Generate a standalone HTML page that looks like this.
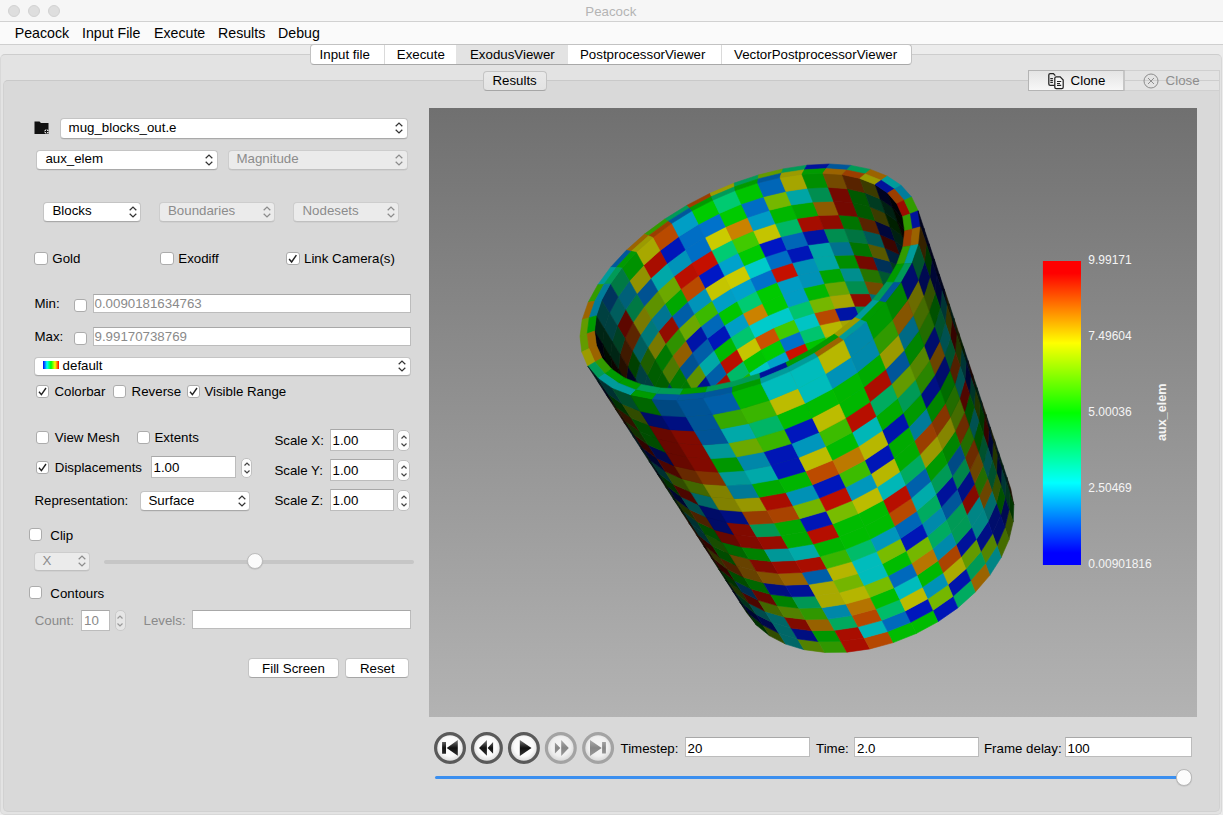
<!DOCTYPE html><html><head><meta charset="utf-8"><style>
*{margin:0;padding:0;box-sizing:border-box}
html,body{width:1223px;height:815px;overflow:hidden;background:#e3e3e3;font-family:"Liberation Sans",sans-serif}
.abs{position:absolute}
.t{position:absolute;line-height:1;white-space:nowrap}
.combo{position:absolute;background:#fff;border:1px solid #c4c4c4;border-bottom-color:#a9a9a9;border-radius:4px;box-shadow:0 0.5px 0.5px rgba(0,0,0,0.08)}
.combo.dis{background:#ebebeb;border-color:#cdcdcd;border-bottom-color:#c0c0c0}
.chev{position:absolute;width:8px;height:12px}
.chev svg{display:block}
.cb{position:absolute;background:#fff;border:1px solid #acacac;border-radius:3px}
.edit{position:absolute;background:#fff;border:1px solid #bcbcbc;border-top-color:#a8a8a8}
.spin{position:absolute;background:#fdfdfd;border:1px solid #c0c0c0;border-radius:5px}
.btn{position:absolute;background:#fff;border:1px solid #c4c4c4;border-bottom-color:#a6a6a6;border-radius:4px}
</style></head><body>
<div class="abs" style="left:0;top:0;width:1223px;height:22px;background:#f6f6f6;border-bottom:1px solid #d1d1d1"></div>
<div class="abs" style="left:8px;top:5px;width:12px;height:12px;border-radius:6px;background:#dedede;border:1px solid #d2d2d2"></div>
<div class="abs" style="left:28px;top:5px;width:12px;height:12px;border-radius:6px;background:#dedede;border:1px solid #d2d2d2"></div>
<div class="abs" style="left:48px;top:5px;width:12px;height:12px;border-radius:6px;background:#dedede;border:1px solid #d2d2d2"></div>
<div class="t" style="left:585.3px;top:4.90px;font-size:13.3px;color:#b4b4b4;">Peacock</div>

<div class="abs" style="left:0;top:22px;width:1223px;height:23px;background:#fafafa;border-bottom:1px solid #cfcfcf"></div>
<div class="t" style="left:14.7px;top:25.97px;font-size:14.2px;color:#000;">Peacock</div>

<div class="t" style="left:82px;top:25.97px;font-size:14.2px;color:#000;">Input File</div>

<div class="t" style="left:154px;top:25.97px;font-size:14.2px;color:#000;">Execute</div>

<div class="t" style="left:218px;top:25.97px;font-size:14.2px;color:#000;">Results</div>

<div class="t" style="left:278px;top:25.97px;font-size:14.2px;color:#000;">Debug</div>

<div class="abs" style="left:0;top:45px;width:1223px;height:770px;background:#ececec"></div>
<div class="abs" style="left:0;top:54px;width:1222px;height:761px;background:#e3e3e3;border:1px solid #d8d8d8;border-top-color:#cdcdcd;border-radius:5px"></div>
<div class="abs" style="left:3px;top:80px;width:1217px;height:732px;background:#d9d9d9;border:1px solid #d1d1d1;border-top-color:#c9c9c9;border-radius:5px;border-top-right-radius:0"></div>
<div class="abs" style="left:310px;top:44px;width:602px;height:21px;background:#fff;border:1px solid #c2c2c2;border-bottom-color:#a9a9a9;border-radius:4px;overflow:hidden"><div class="abs" style="left:145px;top:0;width:112px;height:20px;background:#e3e3e3"></div><div class="abs" style="left:73px;top:0;width:1px;height:20px;background:#dadada"></div><div class="abs" style="left:410px;top:0;width:1px;height:20px;background:#dadada"></div></div>
<div class="t" style="left:319.6px;top:48.00px;font-size:13.3px;color:#000;">Input file</div>

<div class="t" style="left:396.8px;top:48.00px;font-size:13.3px;color:#000;">Execute</div>

<div class="t" style="left:470px;top:48.00px;font-size:13.3px;color:#000;">ExodusViewer</div>

<div class="t" style="left:580px;top:48.00px;font-size:13.3px;color:#000;">PostprocessorViewer</div>

<div class="t" style="left:734px;top:48.00px;font-size:13.3px;color:#000;">VectorPostprocessorViewer</div>

<div class="btn" style="left:482.6px;top:70.6px;width:64px;height:20px;background:linear-gradient(#e9e9e9,#e3e3e3)"></div>
<div class="t" style="left:482.6px;width:64px;text-align:center;top:73.90px;font-size:13.3px">Results</div>

<div class="abs" style="left:1028px;top:70px;width:97px;height:21px;background:linear-gradient(#e4e4e4,#f7f7f7);border:1px solid #b4b4b4;border-right:2px solid #c6c6c6"></div>
<div class="abs" style="left:1125px;top:70px;width:95px;height:21px;background:#e3e3e3;border:1px solid #d0d0d0;border-left:none"></div><div class="abs" style="left:1125px;top:80px;width:94px;height:1px;background:#cecece"></div>
<div class="t" style="left:1070.6px;top:74.00px;font-size:13.3px;color:#000;">Clone</div>

<div class="t" style="left:1165.6px;top:74.00px;font-size:13.3px;color:#8d8d8d;">Close</div>

<svg class="abs" style="left:1040px;top:68px" width="30" height="24" viewBox="1040 68 30 24"><path d="M1054.6 85.3 h-4.4 q-1.4 0 -1.4 -1.4 v-9 q0 -1.4 1.4 -1.4 h3.2 l1.9 2.1" fill="none" stroke="#222" stroke-width="1.25"/><path d="M1050.3 78.5h2.6M1050.3 80.4h2.6M1050.3 82.4h2.6" stroke="#222" stroke-width="1.1"/><path d="M1056.2 76.8 h4 l3 3.3 v7.2 q0 1.4 -1.4 1.4 h-5.6 q-1.4 0 -1.4 -1.4 v-9.1 q0 -1.4 1.4 -1.4 z" fill="#f8f8f8" stroke="#222" stroke-width="1.25"/><path d="M1057 81.5h4.2M1057 83.5h3M1057 85.4h4.2" stroke="#222" stroke-width="1.1"/></svg>
<svg class="abs" style="left:1143px;top:73px" width="16" height="16" viewBox="0 0 16 16"><circle cx="8" cy="8" r="7" fill="none" stroke="#8d8d8d" stroke-width="1"/><path d="M5 5 L11 11 M11 5 L5 11" stroke="#8d8d8d" stroke-width="1"/></svg>
<svg class="abs" style="left:34px;top:120px" width="16" height="15" viewBox="0 0 16 15"><path d="M0.5 1.5 h5 l1.5 1.5 h7.5 v11 h-14 z" fill="#111"/><path d="M10.5 11.5 h4 M12.5 9.5 v4" stroke="#fff" stroke-width="2.4"/><path d="M10.5 11.5 h4 M12.5 9.5 v4" stroke="#111" stroke-width="1.1"/></svg>
<div class="combo" style="left:59.5px;top:118px;width:348px;height:20.5px"></div>
<div class="chev" style="left:395.0px;top:122.2px"><svg width="8" height="12" viewBox="0 0 8 12"><path d="M0.7 4.3 L4 1.1 L7.3 4.3 M0.7 7.7 L4 10.9 L7.3 7.7" fill="none" stroke="#333" stroke-width="1.25"/></svg></div>
<div class="t" style="left:68.6px;top:121.20px;font-size:13.3px;color:#000;">mug_blocks_out.e</div>

<div class="combo" style="left:36px;top:150px;width:181.5px;height:20px"></div>
<div class="chev" style="left:205.0px;top:154.0px"><svg width="8" height="12" viewBox="0 0 8 12"><path d="M0.7 4.3 L4 1.1 L7.3 4.3 M0.7 7.7 L4 10.9 L7.3 7.7" fill="none" stroke="#333" stroke-width="1.25"/></svg></div>
<div class="t" style="left:45.4px;top:152.10px;font-size:13.3px;color:#000;">aux_elem</div>

<div class="combo dis" style="left:227.5px;top:150px;width:180px;height:20px"></div>
<div class="chev" style="left:395.0px;top:154.0px"><svg width="8" height="12" viewBox="0 0 8 12"><path d="M0.7 4.3 L4 1.1 L7.3 4.3 M0.7 7.7 L4 10.9 L7.3 7.7" fill="none" stroke="#8c8c8c" stroke-width="1.25"/></svg></div>
<div class="t" style="left:236.5px;top:152.10px;font-size:13.3px;color:#8c8c8c;">Magnitude</div>

<div class="combo" style="left:43.4px;top:202px;width:97.6px;height:19.5px"></div>
<div class="chev" style="left:128.5px;top:205.8px"><svg width="8" height="12" viewBox="0 0 8 12"><path d="M0.7 4.3 L4 1.1 L7.3 4.3 M0.7 7.7 L4 10.9 L7.3 7.7" fill="none" stroke="#333" stroke-width="1.25"/></svg></div>
<div class="t" style="left:52.5px;top:204.20px;font-size:13.3px;color:#000;">Blocks</div>

<div class="combo dis" style="left:159px;top:202px;width:116px;height:19.5px"></div>
<div class="chev" style="left:262.5px;top:205.8px"><svg width="8" height="12" viewBox="0 0 8 12"><path d="M0.7 4.3 L4 1.1 L7.3 4.3 M0.7 7.7 L4 10.9 L7.3 7.7" fill="none" stroke="#8c8c8c" stroke-width="1.25"/></svg></div>
<div class="t" style="left:168px;top:204.20px;font-size:13.3px;color:#8c8c8c;">Boundaries</div>

<div class="combo dis" style="left:293.4px;top:202px;width:106px;height:19.5px"></div>
<div class="chev" style="left:386.9px;top:205.8px"><svg width="8" height="12" viewBox="0 0 8 12"><path d="M0.7 4.3 L4 1.1 L7.3 4.3 M0.7 7.7 L4 10.9 L7.3 7.7" fill="none" stroke="#8c8c8c" stroke-width="1.25"/></svg></div>
<div class="t" style="left:302.5px;top:204.20px;font-size:13.3px;color:#8c8c8c;">Nodesets</div>

<div class="cb" style="left:34px;top:251.5px;width:13.5px;height:13.5px"></div>

<div class="t" style="left:52.3px;top:251.80px;font-size:13.3px;color:#000;">Gold</div>

<div class="cb" style="left:160px;top:251.5px;width:13.5px;height:13.5px"></div>

<div class="t" style="left:178.3px;top:251.80px;font-size:13.3px;color:#000;">Exodiff</div>

<div class="cb" style="left:286px;top:251.5px;width:13.5px;height:13.5px"></div>
<svg class="abs" style="left:286px;top:251.5px" width="13.5" height="13.5" viewBox="0 0 13 13"><path d="M3 6.8 L5.4 9.6 L10 3" fill="none" stroke="#222" stroke-width="1.4"/></svg>

<div class="t" style="left:304px;top:251.80px;font-size:13.3px;color:#000;">Link Camera(s)</div>

<div class="t" style="left:34.5px;top:297.10px;font-size:13.3px;color:#000;">Min:</div>

<div class="cb" style="left:74.4px;top:298.6px;width:13px;height:13px"></div>

<div class="edit" style="left:92.9px;top:294px;width:318px;height:19px"></div>
<div class="t" style="left:94.5px;top:297.10px;font-size:13.3px;color:#8a8a8a;">0.0090181634763</div>

<div class="t" style="left:34.5px;top:330.30px;font-size:13.3px;color:#000;">Max:</div>

<div class="cb" style="left:74.4px;top:332px;width:13px;height:13px"></div>

<div class="edit" style="left:92.9px;top:327.2px;width:318px;height:19px"></div>
<div class="t" style="left:94.5px;top:330.30px;font-size:13.3px;color:#8a8a8a;">9.99170738769</div>

<div class="combo" style="left:33.5px;top:356.5px;width:377px;height:19.5px"></div>
<div class="chev" style="left:398.0px;top:360.2px"><svg width="8" height="12" viewBox="0 0 8 12"><path d="M0.7 4.3 L4 1.1 L7.3 4.3 M0.7 7.7 L4 10.9 L7.3 7.7" fill="none" stroke="#333" stroke-width="1.25"/></svg></div>
<div class="abs" style="left:42.7px;top:360.7px;width:16.3px;height:8.5px;background:linear-gradient(90deg,#00f,#0ff,#0f0,#ff0,#f00)"></div><div class="t" style="left:62.6px;top:358.90px;font-size:13.3px;color:#000;">default</div>

<div class="cb" style="left:36.4px;top:384.8px;width:13px;height:13px"></div>
<svg class="abs" style="left:36.4px;top:384.8px" width="13" height="13" viewBox="0 0 13 13"><path d="M3 6.8 L5.4 9.6 L10 3" fill="none" stroke="#222" stroke-width="1.4"/></svg>

<div class="t" style="left:54.4px;top:384.90px;font-size:13.3px;color:#000;">Colorbar</div>

<div class="cb" style="left:113.3px;top:384.8px;width:13px;height:13px"></div>

<div class="t" style="left:131.6px;top:384.90px;font-size:13.3px;color:#000;">Reverse</div>

<div class="cb" style="left:186.6px;top:384.8px;width:13px;height:13px"></div>
<svg class="abs" style="left:186.6px;top:384.8px" width="13" height="13" viewBox="0 0 13 13"><path d="M3 6.8 L5.4 9.6 L10 3" fill="none" stroke="#222" stroke-width="1.4"/></svg>

<div class="t" style="left:204.4px;top:384.90px;font-size:13.3px;color:#000;">Visible Range</div>

<div class="cb" style="left:36.4px;top:430.8px;width:13px;height:13px"></div>

<div class="t" style="left:54.8px;top:430.80px;font-size:13.3px;color:#000;">View Mesh</div>

<div class="cb" style="left:136.5px;top:430.8px;width:13px;height:13px"></div>

<div class="t" style="left:154.5px;top:430.80px;font-size:13.3px;color:#000;">Extents</div>

<div class="cb" style="left:36.4px;top:460.8px;width:13px;height:13px"></div>
<svg class="abs" style="left:36.4px;top:460.8px" width="13" height="13" viewBox="0 0 13 13"><path d="M3 6.8 L5.4 9.6 L10 3" fill="none" stroke="#222" stroke-width="1.4"/></svg>

<div class="t" style="left:54.8px;top:461.20px;font-size:13.3px;color:#000;">Displacements</div>

<div class="edit" style="left:151.2px;top:456.3px;width:85.3px;height:21.6px"></div>
<div class="t" style="left:153.5px;top:461.20px;font-size:13.3px;color:#000;">1.00</div>

<div class="spin" style="left:240.9px;top:458.3px;width:11.5px;height:20.2px"></div>
<div class="abs" style="left:242.7px;top:461.4px"><svg width="8" height="14" viewBox="0 0 8 14"><path d="M1.5 4.5 L4 2 L6.5 4.5 M1.5 9.5 L4 12 L6.5 9.5" fill="none" stroke="#444" stroke-width="1.2"/></svg></div>

<div class="t" style="left:34.4px;top:494.00px;font-size:13.3px;color:#000;">Representation:</div>

<div class="combo" style="left:139.8px;top:490.6px;width:110.5px;height:20px"></div>
<div class="chev" style="left:237.8px;top:494.6px"><svg width="8" height="12" viewBox="0 0 8 12"><path d="M0.7 4.3 L4 1.1 L7.3 4.3 M0.7 7.7 L4 10.9 L7.3 7.7" fill="none" stroke="#333" stroke-width="1.25"/></svg></div>
<div class="t" style="left:148.5px;top:494.00px;font-size:13.3px;color:#000;">Surface</div>

<div class="t" style="left:274.4px;top:433.80px;font-size:13.3px;color:#000;">Scale X:</div>

<div class="edit" style="left:330.1px;top:429.2px;width:63.8px;height:21.5px"></div>
<div class="t" style="left:332.5px;top:433.80px;font-size:13.3px;color:#000;">1.00</div>

<div class="spin" style="left:397.4px;top:430.2px;width:12.2px;height:21px"></div>
<div class="abs" style="left:399.5px;top:433.7px"><svg width="8" height="14" viewBox="0 0 8 14"><path d="M1.5 4.5 L4 2 L6.5 4.5 M1.5 9.5 L4 12 L6.5 9.5" fill="none" stroke="#444" stroke-width="1.2"/></svg></div>

<div class="t" style="left:274.4px;top:463.50px;font-size:13.3px;color:#000;">Scale Y:</div>

<div class="edit" style="left:330.1px;top:459.2px;width:63.8px;height:21.5px"></div>
<div class="t" style="left:332.5px;top:463.50px;font-size:13.3px;color:#000;">1.00</div>

<div class="spin" style="left:397.4px;top:460.2px;width:12.2px;height:21px"></div>
<div class="abs" style="left:399.5px;top:463.7px"><svg width="8" height="14" viewBox="0 0 8 14"><path d="M1.5 4.5 L4 2 L6.5 4.5 M1.5 9.5 L4 12 L6.5 9.5" fill="none" stroke="#444" stroke-width="1.2"/></svg></div>

<div class="t" style="left:274.4px;top:493.60px;font-size:13.3px;color:#000;">Scale Z:</div>

<div class="edit" style="left:330.1px;top:489.3px;width:63.8px;height:21.5px"></div>
<div class="t" style="left:332.5px;top:493.60px;font-size:13.3px;color:#000;">1.00</div>

<div class="spin" style="left:397.4px;top:490.3px;width:12.2px;height:21px"></div>
<div class="abs" style="left:399.5px;top:493.8px"><svg width="8" height="14" viewBox="0 0 8 14"><path d="M1.5 4.5 L4 2 L6.5 4.5 M1.5 9.5 L4 12 L6.5 9.5" fill="none" stroke="#444" stroke-width="1.2"/></svg></div>

<div class="cb" style="left:28.5px;top:527.7px;width:13px;height:13px"></div>

<div class="t" style="left:50.3px;top:529.20px;font-size:13.3px;color:#000;">Clip</div>

<div class="combo dis" style="left:33.9px;top:551.6px;width:56.4px;height:19.6px"></div>
<div class="chev" style="left:77.8px;top:555.4px"><svg width="8" height="12" viewBox="0 0 8 12"><path d="M0.7 4.3 L4 1.1 L7.3 4.3 M0.7 7.7 L4 10.9 L7.3 7.7" fill="none" stroke="#8c8c8c" stroke-width="1.25"/></svg></div>
<div class="t" style="left:42.6px;top:553.80px;font-size:13.3px;color:#8c8c8c;">X</div>

<div class="abs" style="left:104px;top:559.5px;width:310px;height:4px;border-radius:2px;background:#c6c6c6"></div>
<div class="abs" style="left:247px;top:553.2px;width:16.2px;height:16.2px;border-radius:8.1px;background:#fbfbfb;border:1px solid #bdbdbd;box-shadow:0 0.5px 1px rgba(0,0,0,0.15)"></div>
<div class="cb" style="left:28.5px;top:585.7px;width:13px;height:13px"></div>

<div class="t" style="left:50.3px;top:586.90px;font-size:13.3px;color:#000;">Contours</div>

<div class="t" style="left:34.7px;top:613.90px;font-size:13.3px;color:#8a8a8a;">Count:</div>

<div class="edit" style="left:81.3px;top:609.5px;width:29.1px;height:21px"></div>
<div class="t" style="left:84px;top:613.90px;font-size:13.3px;color:#8a8a8a;">10</div>

<div class="spin" style="left:114.5px;top:610px;width:11.8px;height:21px;background:#e6e6e6;border-color:#cacaca"></div>
<div class="abs" style="left:116.4px;top:613.5px"><svg width="8" height="14" viewBox="0 0 8 14"><path d="M1.5 4.5 L4 2 L6.5 4.5 M1.5 9.5 L4 12 L6.5 9.5" fill="none" stroke="#999" stroke-width="1.2"/></svg></div>

<div class="t" style="left:143.5px;top:613.90px;font-size:13.3px;color:#8a8a8a;">Levels:</div>

<div class="edit" style="left:191.7px;top:609.6px;width:219px;height:19.7px"></div>

<div class="btn" style="left:247.7px;top:658.4px;width:91.6px;height:20px"></div>
<div class="t" style="left:247.7px;width:91.6px;text-align:center;top:662.30px;font-size:13.3px">Fill Screen</div>

<div class="btn" style="left:345.4px;top:658.4px;width:63.8px;height:20px"></div>
<div class="t" style="left:345.4px;width:63.8px;text-align:center;top:662.30px;font-size:13.3px">Reset</div>

<div class="abs" style="left:429px;top:108px;width:768px;height:609px;background:linear-gradient(#707070,#b3b3b3);overflow:hidden"><svg class="abs" style="left:0;top:0" width="768" height="609" viewBox="0 0 768 609">
<polygon points="394.4,323.0 399.5,333.9 382.1,343.2 376.7,332.4" fill="#cb1300" stroke="#cb1300" stroke-width="0.6"/>
<polygon points="412.8,315.4 417.8,326.4 399.5,333.9 394.4,323.0" fill="#00ca87" stroke="#00ca87" stroke-width="0.6"/>
<polygon points="376.7,332.4 382.1,343.2 365.8,354.0 360.3,343.3" fill="#6dc500" stroke="#6dc500" stroke-width="0.6"/>
<polygon points="431.7,309.8 436.5,320.8 417.8,326.4 412.8,315.4" fill="#00c45d" stroke="#00c45d" stroke-width="0.6"/>
<polygon points="360.3,343.3 365.8,354.0 351.0,366.2 345.3,355.6" fill="#1fb900" stroke="#1fb900" stroke-width="0.6"/>
<polygon points="450.6,306.2 455.3,317.3 436.5,320.8 431.7,309.8" fill="#b75300" stroke="#b75300" stroke-width="0.6"/>
<polygon points="389.1,312.1 394.4,323.0 376.7,332.4 371.3,321.5" fill="#57cb00" stroke="#57cb00" stroke-width="0.6"/>
<polygon points="407.7,304.4 412.8,315.4 394.4,323.0 389.1,312.1" fill="#ca0900" stroke="#ca0900" stroke-width="0.6"/>
<polygon points="371.3,321.5 376.7,332.4 360.3,343.3 354.7,332.5" fill="#000cc5" stroke="#000cc5" stroke-width="0.6"/>
<polygon points="426.8,298.6 431.7,309.8 412.8,315.4 407.7,304.4" fill="#0028c4" stroke="#0028c4" stroke-width="0.6"/>
<polygon points="345.3,355.6 351.0,366.2 338.0,379.6 332.1,369.0" fill="#0048a8" stroke="#0048a8" stroke-width="0.6"/>
<polygon points="469.2,304.7 473.8,315.9 455.3,317.3 450.6,306.2" fill="#a50d00" stroke="#a50d00" stroke-width="0.6"/>
<polygon points="354.7,332.5 360.3,343.3 345.3,355.6 339.5,344.9" fill="#b99e00" stroke="#b99e00" stroke-width="0.6"/>
<polygon points="445.9,295.0 450.6,306.2 431.7,309.8 426.8,298.6" fill="#00b719" stroke="#00b719" stroke-width="0.6"/>
<polygon points="383.8,301.0 389.1,312.1 371.3,321.5 365.8,310.5" fill="#cb7700" stroke="#cb7700" stroke-width="0.6"/>
<polygon points="402.6,293.2 407.7,304.4 389.1,312.1 383.8,301.0" fill="#ca5300" stroke="#ca5300" stroke-width="0.6"/>
<polygon points="365.8,310.5 371.3,321.5 354.7,332.5 349.0,321.6" fill="#009ec5" stroke="#009ec5" stroke-width="0.6"/>
<polygon points="421.8,287.4 426.8,298.6 407.7,304.4 402.6,293.2" fill="#c4a200" stroke="#c4a200" stroke-width="0.6"/>
<polygon points="339.5,344.9 345.3,355.6 332.1,369.0 326.2,358.4" fill="#a85900" stroke="#a85900" stroke-width="0.6"/>
<polygon points="332.1,369.0 338.0,379.6 327.1,393.8 321.1,383.3" fill="#009216" stroke="#009216" stroke-width="0.6"/>
<polygon points="464.7,293.4 469.2,304.7 450.6,306.2 445.9,295.0" fill="#00a591" stroke="#00a591" stroke-width="0.6"/>
<polygon points="349.0,321.6 354.7,332.5 339.5,344.9 333.7,334.0" fill="#87b900" stroke="#87b900" stroke-width="0.6"/>
<polygon points="487.1,305.5 491.5,316.7 473.8,315.9 469.2,304.7" fill="#698e00" stroke="#698e00" stroke-width="0.6"/>
<polygon points="441.1,283.6 445.9,295.0 426.8,298.6 421.8,287.4" fill="#b79800" stroke="#b79800" stroke-width="0.6"/>
<polygon points="378.5,289.7 383.8,301.0 365.8,310.5 360.3,299.3" fill="#0054cb" stroke="#0054cb" stroke-width="0.6"/>
<polygon points="397.4,281.9 402.6,293.2 383.8,301.0 378.5,289.7" fill="#ca6400" stroke="#ca6400" stroke-width="0.6"/>
<polygon points="360.3,299.3 365.8,310.5 349.0,321.6 343.3,310.5" fill="#c5a600" stroke="#c5a600" stroke-width="0.6"/>
<polygon points="416.8,276.0 421.8,287.4 402.6,293.2 397.4,281.9" fill="#89c400" stroke="#89c400" stroke-width="0.6"/>
<polygon points="333.7,334.0 339.5,344.9 326.2,358.4 320.2,347.6" fill="#88a800" stroke="#88a800" stroke-width="0.6"/>
<polygon points="326.2,358.4 332.1,369.0 321.1,383.3 315.1,372.7" fill="#009269" stroke="#009269" stroke-width="0.6"/>
<polygon points="460.0,282.0 464.7,293.4 445.9,295.0 441.1,283.6" fill="#a53f00" stroke="#a53f00" stroke-width="0.6"/>
<polygon points="343.3,310.5 349.0,321.6 333.7,334.0 327.8,323.0" fill="#28b900" stroke="#28b900" stroke-width="0.6"/>
<polygon points="482.7,294.1 487.1,305.5 469.2,304.7 464.7,293.4" fill="#8e1b00" stroke="#8e1b00" stroke-width="0.6"/>
<polygon points="436.3,272.1 441.1,283.6 421.8,287.4 416.8,276.0" fill="#0099b7" stroke="#0099b7" stroke-width="0.6"/>
<polygon points="321.1,383.3 327.1,393.8 318.6,408.6 312.5,398.2" fill="#797700" stroke="#797700" stroke-width="0.6"/>
<polygon points="373.0,278.4 378.5,289.7 360.3,299.3 354.7,288.1" fill="#007acb" stroke="#007acb" stroke-width="0.6"/>
<polygon points="392.2,270.5 397.4,281.9 378.5,289.7 373.0,278.4" fill="#56ca00" stroke="#56ca00" stroke-width="0.6"/>
<polygon points="503.9,308.4 508.1,319.7 491.5,316.7 487.1,305.5" fill="#005674" stroke="#005674" stroke-width="0.6"/>
<polygon points="354.7,288.1 360.3,299.3 343.3,310.5 337.5,299.3" fill="#c53600" stroke="#c53600" stroke-width="0.6"/>
<polygon points="411.8,264.5 416.8,276.0 397.4,281.9 392.2,270.5" fill="#00c40d" stroke="#00c40d" stroke-width="0.6"/>
<polygon points="327.8,323.0 333.7,334.0 320.2,347.6 314.2,336.7" fill="#00a807" stroke="#00a807" stroke-width="0.6"/>
<polygon points="320.2,347.6 326.2,358.4 315.1,372.7 308.9,362.0" fill="#009276" stroke="#009276" stroke-width="0.6"/>
<polygon points="455.4,270.4 460.0,282.0 441.1,283.6 436.3,272.1" fill="#009aa5" stroke="#009aa5" stroke-width="0.6"/>
<polygon points="337.5,299.3 343.3,310.5 327.8,323.0 321.8,312.0" fill="#0070b9" stroke="#0070b9" stroke-width="0.6"/>
<polygon points="478.2,282.6 482.7,294.1 464.7,293.4 460.0,282.0" fill="#008e27" stroke="#008e27" stroke-width="0.6"/>
<polygon points="431.4,260.5 436.3,272.1 416.8,276.0 411.8,264.5" fill="#4db700" stroke="#4db700" stroke-width="0.6"/>
<polygon points="315.1,372.7 321.1,383.3 312.5,398.2 306.3,387.7" fill="#791b00" stroke="#791b00" stroke-width="0.6"/>
<polygon points="367.6,266.9 373.0,278.4 354.7,288.1 349.0,276.7" fill="#cb7700" stroke="#cb7700" stroke-width="0.6"/>
<polygon points="386.9,258.9 392.2,270.5 373.0,278.4 367.6,266.9" fill="#3bca00" stroke="#3bca00" stroke-width="0.6"/>
<polygon points="499.6,297.0 503.9,308.4 487.1,305.5 482.7,294.1" fill="#007409" stroke="#007409" stroke-width="0.6"/>
<polygon points="349.0,276.7 354.7,288.1 337.5,299.3 331.7,288.0" fill="#006dc5" stroke="#006dc5" stroke-width="0.6"/>
<polygon points="406.7,252.8 411.8,264.5 392.2,270.5 386.9,258.9" fill="#00c461" stroke="#00c461" stroke-width="0.6"/>
<polygon points="312.5,398.2 318.6,408.6 312.8,423.7 306.5,413.4" fill="#085d00" stroke="#085d00" stroke-width="0.6"/>
<polygon points="321.8,312.0 327.8,323.0 314.2,336.7 308.1,325.7" fill="#a83200" stroke="#a83200" stroke-width="0.6"/>
<polygon points="519.2,313.7 523.3,325.0 508.1,319.7 503.9,308.4" fill="#485800" stroke="#485800" stroke-width="0.6"/>
<polygon points="314.2,336.7 320.2,347.6 308.9,362.0 302.7,351.2" fill="#009225" stroke="#009225" stroke-width="0.6"/>
<polygon points="450.7,258.7 455.4,270.4 436.3,272.1 431.4,260.5" fill="#a59a00" stroke="#a59a00" stroke-width="0.6"/>
<polygon points="331.7,288.0 337.5,299.3 321.8,312.0 315.8,300.7" fill="#b92800" stroke="#b92800" stroke-width="0.6"/>
<polygon points="473.7,271.0 478.2,282.6 460.0,282.0 455.4,270.4" fill="#008e49" stroke="#008e49" stroke-width="0.6"/>
<polygon points="426.5,248.8 431.4,260.5 411.8,264.5 406.7,252.8" fill="#b79b00" stroke="#b79b00" stroke-width="0.6"/>
<polygon points="308.9,362.0 315.1,372.7 306.3,387.7 300.0,377.1" fill="#001179" stroke="#001179" stroke-width="0.6"/>
<polygon points="362.0,255.3 367.6,266.9 349.0,276.7 343.3,265.2" fill="#cb1400" stroke="#cb1400" stroke-width="0.6"/>
<polygon points="381.5,247.2 386.9,258.9 367.6,266.9 362.0,255.3" fill="#0aca00" stroke="#0aca00" stroke-width="0.6"/>
<polygon points="495.3,285.5 499.6,297.0 482.7,294.1 478.2,282.6" fill="#001374" stroke="#001374" stroke-width="0.6"/>
<polygon points="343.3,265.2 349.0,276.7 331.7,288.0 325.7,276.6" fill="#0049c5" stroke="#0049c5" stroke-width="0.6"/>
<polygon points="401.5,241.0 406.7,252.8 386.9,258.9 381.5,247.2" fill="#0fc400" stroke="#0fc400" stroke-width="0.6"/>
<polygon points="306.3,387.7 312.5,398.2 306.5,413.4 300.2,402.9" fill="#365d00" stroke="#365d00" stroke-width="0.6"/>
<polygon points="315.8,300.7 321.8,312.0 308.1,325.7 301.9,314.6" fill="#7fa800" stroke="#7fa800" stroke-width="0.6"/>
<polygon points="515.0,302.2 519.2,313.7 503.9,308.4 499.6,297.0" fill="#005458" stroke="#005458" stroke-width="0.6"/>
<polygon points="308.1,325.7 314.2,336.7 302.7,351.2 296.4,340.3" fill="#00925f" stroke="#00925f" stroke-width="0.6"/>
<polygon points="445.9,246.9 450.7,258.7 431.4,260.5 426.5,248.8" fill="#00a52d" stroke="#00a52d" stroke-width="0.6"/>
<polygon points="325.7,276.6 331.7,288.0 315.8,300.7 309.7,289.4" fill="#000fb9" stroke="#000fb9" stroke-width="0.6"/>
<polygon points="469.1,259.2 473.7,271.0 455.4,270.4 450.7,258.7" fill="#004b8e" stroke="#004b8e" stroke-width="0.6"/>
<polygon points="421.5,236.9 426.5,248.8 406.7,252.8 401.5,241.0" fill="#00b743" stroke="#00b743" stroke-width="0.6"/>
<polygon points="302.7,351.2 308.9,362.0 300.0,377.1 293.7,366.3" fill="#00795e" stroke="#00795e" stroke-width="0.6"/>
<polygon points="356.4,243.6 362.0,255.3 343.3,265.2 337.5,253.6" fill="#00a2cb" stroke="#00a2cb" stroke-width="0.6"/>
<polygon points="306.5,413.4 312.8,423.7 309.8,438.7 303.4,428.4" fill="#402300" stroke="#402300" stroke-width="0.6"/>
<polygon points="376.1,235.4 381.5,247.2 362.0,255.3 356.4,243.6" fill="#ca1000" stroke="#ca1000" stroke-width="0.6"/>
<polygon points="490.9,273.8 495.3,285.5 478.2,282.6 473.7,271.0" fill="#487400" stroke="#487400" stroke-width="0.6"/>
<polygon points="337.5,253.6 343.3,265.2 325.7,276.6 319.8,265.1" fill="#00c5c5" stroke="#00c5c5" stroke-width="0.6"/>
<polygon points="532.5,321.0 536.6,332.4 523.3,325.0 519.2,313.7" fill="#003b09" stroke="#003b09" stroke-width="0.6"/>
<polygon points="396.3,229.1 401.5,241.0 381.5,247.2 376.1,235.4" fill="#00c400" stroke="#00c400" stroke-width="0.6"/>
<polygon points="300.0,377.1 306.3,387.7 300.2,402.9 293.8,392.3" fill="#5d3000" stroke="#5d3000" stroke-width="0.6"/>
<polygon points="309.7,289.4 315.8,300.7 301.9,314.6 295.6,303.3" fill="#a88f00" stroke="#a88f00" stroke-width="0.6"/>
<polygon points="510.8,290.6 515.0,302.2 499.6,297.0 495.3,285.5" fill="#004158" stroke="#004158" stroke-width="0.6"/>
<polygon points="301.9,314.6 308.1,325.7 296.4,340.3 290.1,329.2" fill="#009277" stroke="#009277" stroke-width="0.6"/>
<polygon points="441.0,235.0 445.9,246.9 426.5,248.8 421.5,236.9" fill="#a57e00" stroke="#a57e00" stroke-width="0.6"/>
<polygon points="319.8,265.1 325.7,276.6 309.7,289.4 303.6,277.9" fill="#19b900" stroke="#19b900" stroke-width="0.6"/>
<polygon points="464.5,247.3 469.1,259.2 450.7,258.7 445.9,246.9" fill="#8e8e00" stroke="#8e8e00" stroke-width="0.6"/>
<polygon points="416.4,224.9 421.5,236.9 401.5,241.0 396.3,229.1" fill="#75b700" stroke="#75b700" stroke-width="0.6"/>
<polygon points="350.8,231.7 356.4,243.6 337.5,253.6 331.7,241.8" fill="#00cb00" stroke="#00cb00" stroke-width="0.6"/>
<polygon points="296.4,340.3 302.7,351.2 293.7,366.3 287.3,355.4" fill="#007935" stroke="#007935" stroke-width="0.6"/>
<polygon points="370.7,223.5 376.1,235.4 356.4,243.6 350.8,231.7" fill="#0071ca" stroke="#0071ca" stroke-width="0.6"/>
<polygon points="300.2,402.9 306.5,413.4 303.4,428.4 297.0,418.1" fill="#304000" stroke="#304000" stroke-width="0.6"/>
<polygon points="486.5,261.9 490.9,273.8 473.7,271.0 469.1,259.2" fill="#745d00" stroke="#745d00" stroke-width="0.6"/>
<polygon points="331.7,241.8 337.5,253.6 319.8,265.1 313.7,253.4" fill="#00c500" stroke="#00c500" stroke-width="0.6"/>
<polygon points="528.5,309.5 532.5,321.0 519.2,313.7 515.0,302.2" fill="#3b3b00" stroke="#3b3b00" stroke-width="0.6"/>
<polygon points="391.0,217.1 396.3,229.1 376.1,235.4 370.7,223.5" fill="#00c46e" stroke="#00c46e" stroke-width="0.6"/>
<polygon points="293.7,366.3 300.0,377.1 293.8,392.3 287.4,381.6" fill="#5d2200" stroke="#5d2200" stroke-width="0.6"/>
<polygon points="303.6,277.9 309.7,289.4 295.6,303.3 289.3,291.9" fill="#0ea800" stroke="#0ea800" stroke-width="0.6"/>
<polygon points="506.5,278.8 510.8,290.6 495.3,285.5 490.9,273.8" fill="#075800" stroke="#075800" stroke-width="0.6"/>
<polygon points="295.6,303.3 301.9,314.6 290.1,329.2 283.7,318.0" fill="#005292" stroke="#005292" stroke-width="0.6"/>
<polygon points="303.4,428.4 309.8,438.7 309.7,453.4 303.3,443.1" fill="#250e00" stroke="#250e00" stroke-width="0.6"/>
<polygon points="436.2,222.9 441.0,235.0 421.5,236.9 416.4,224.9" fill="#a53100" stroke="#a53100" stroke-width="0.6"/>
<polygon points="313.7,253.4 319.8,265.1 303.6,277.9 297.3,266.3" fill="#00b968" stroke="#00b968" stroke-width="0.6"/>
<polygon points="459.8,235.3 464.5,247.3 445.9,246.9 441.0,235.0" fill="#008e48" stroke="#008e48" stroke-width="0.6"/>
<polygon points="411.3,212.8 416.4,224.9 396.3,229.1 391.0,217.1" fill="#b7b700" stroke="#b7b700" stroke-width="0.6"/>
<polygon points="345.0,219.7 350.8,231.7 331.7,241.8 325.7,229.9" fill="#cb5100" stroke="#cb5100" stroke-width="0.6"/>
<polygon points="290.1,329.2 296.4,340.3 287.3,355.4 280.8,344.4" fill="#447900" stroke="#447900" stroke-width="0.6"/>
<polygon points="365.1,211.4 370.7,223.5 350.8,231.7 345.0,219.7" fill="#41ca00" stroke="#41ca00" stroke-width="0.6"/>
<polygon points="543.7,330.5 547.6,341.9 536.6,332.4 532.5,321.0" fill="#0d2000" stroke="#0d2000" stroke-width="0.6"/>
<polygon points="293.8,392.3 300.2,402.9 297.0,418.1 290.5,407.5" fill="#000140" stroke="#000140" stroke-width="0.6"/>
<polygon points="482.0,250.0 486.5,261.9 469.1,259.2 464.5,247.3" fill="#007412" stroke="#007412" stroke-width="0.6"/>
<polygon points="325.7,229.9 331.7,241.8 313.7,253.4 307.6,241.6" fill="#c5c500" stroke="#c5c500" stroke-width="0.6"/>
<polygon points="385.6,204.9 391.0,217.1 370.7,223.5 365.1,211.4" fill="#00c4c4" stroke="#00c4c4" stroke-width="0.6"/>
<polygon points="524.4,297.9 528.5,309.5 515.0,302.2 510.8,290.6" fill="#3b0800" stroke="#3b0800" stroke-width="0.6"/>
<polygon points="287.3,355.4 293.7,366.3 287.4,381.6 280.8,370.8" fill="#465d00" stroke="#465d00" stroke-width="0.6"/>
<polygon points="297.3,266.3 303.6,277.9 289.3,291.9 282.9,280.4" fill="#a80d00" stroke="#a80d00" stroke-width="0.6"/>
<polygon points="289.3,291.9 295.6,303.3 283.7,318.0 277.2,306.7" fill="#000f92" stroke="#000f92" stroke-width="0.6"/>
<polygon points="502.2,266.9 506.5,278.8 490.9,273.8 486.5,261.9" fill="#515800" stroke="#515800" stroke-width="0.6"/>
<polygon points="297.0,418.1 303.4,428.4 303.3,443.1 296.8,432.8" fill="#001725" stroke="#001725" stroke-width="0.6"/>
<polygon points="431.2,210.7 436.2,222.9 416.4,224.9 411.3,212.8" fill="#a5a500" stroke="#a5a500" stroke-width="0.6"/>
<polygon points="307.6,241.6 313.7,253.4 297.3,266.3 291.0,254.6" fill="#b90f00" stroke="#b90f00" stroke-width="0.6"/>
<polygon points="455.1,223.1 459.8,235.3 441.0,235.0 436.2,222.9" fill="#198e00" stroke="#198e00" stroke-width="0.6"/>
<polygon points="406.1,200.5 411.3,212.8 391.0,217.1 385.6,204.9" fill="#b74900" stroke="#b74900" stroke-width="0.6"/>
<polygon points="339.2,207.6 345.0,219.7 325.7,229.9 319.7,217.8" fill="#00cbcb" stroke="#00cbcb" stroke-width="0.6"/>
<polygon points="359.5,199.1 365.1,211.4 345.0,219.7 339.2,207.6" fill="#00caca" stroke="#00caca" stroke-width="0.6"/>
<polygon points="283.7,318.0 290.1,329.2 280.8,344.4 274.2,333.3" fill="#790300" stroke="#790300" stroke-width="0.6"/>
<polygon points="539.7,319.0 543.7,330.5 532.5,321.0 528.5,309.5" fill="#200000" stroke="#200000" stroke-width="0.6"/>
<polygon points="287.4,381.6 293.8,392.3 290.5,407.5 284.0,396.9" fill="#004008" stroke="#004008" stroke-width="0.6"/>
<polygon points="477.4,237.9 482.0,250.0 464.5,247.3 459.8,235.3" fill="#00745c" stroke="#00745c" stroke-width="0.6"/>
<polygon points="319.7,217.8 325.7,229.9 307.6,241.6 301.4,229.6" fill="#00c56e" stroke="#00c56e" stroke-width="0.6"/>
<polygon points="380.2,192.6 385.6,204.9 365.1,211.4 359.5,199.1" fill="#00c46e" stroke="#00c46e" stroke-width="0.6"/>
<polygon points="520.2,286.1 524.4,297.9 510.8,290.6 506.5,278.8" fill="#003b04" stroke="#003b04" stroke-width="0.6"/>
<polygon points="280.8,344.4 287.3,355.4 280.8,370.8 274.2,359.9" fill="#5d0e00" stroke="#5d0e00" stroke-width="0.6"/>
<polygon points="303.3,443.1 309.7,453.4 312.7,467.2 306.3,457.0" fill="#0c0900" stroke="#0c0900" stroke-width="0.6"/>
<polygon points="291.0,254.6 297.3,266.3 282.9,280.4 276.4,268.7" fill="#005ea8" stroke="#005ea8" stroke-width="0.6"/>
<polygon points="282.9,280.4 289.3,291.9 277.2,306.7 270.6,295.2" fill="#009244" stroke="#009244" stroke-width="0.6"/>
<polygon points="497.8,254.9 502.2,266.9 486.5,261.9 482.0,250.0" fill="#583c00" stroke="#583c00" stroke-width="0.6"/>
<polygon points="290.5,407.5 297.0,418.1 296.8,432.8 290.3,422.3" fill="#001825" stroke="#001825" stroke-width="0.6"/>
<polygon points="552.2,341.8 556.1,353.2 547.6,341.9 543.7,330.5" fill="#090100" stroke="#090100" stroke-width="0.6"/>
<polygon points="426.2,198.3 431.2,210.7 411.3,212.8 406.1,200.5" fill="#0014a5" stroke="#0014a5" stroke-width="0.6"/>
<polygon points="301.4,229.6 307.6,241.6 291.0,254.6 284.7,242.7" fill="#00b900" stroke="#00b900" stroke-width="0.6"/>
<polygon points="450.3,210.8 455.1,223.1 436.2,222.9 431.2,210.7" fill="#278e00" stroke="#278e00" stroke-width="0.6"/>
<polygon points="400.9,188.1 406.1,200.5 385.6,204.9 380.2,192.6" fill="#75b700" stroke="#75b700" stroke-width="0.6"/>
<polygon points="333.4,195.4 339.2,207.6 319.7,217.8 313.7,205.7" fill="#cb8200" stroke="#cb8200" stroke-width="0.6"/>
<polygon points="353.9,186.8 359.5,199.1 339.2,207.6 333.4,195.4" fill="#00ca00" stroke="#00ca00" stroke-width="0.6"/>
<polygon points="277.2,306.7 283.7,318.0 274.2,333.3 267.6,322.0" fill="#2e7900" stroke="#2e7900" stroke-width="0.6"/>
<polygon points="535.6,307.3 539.7,319.0 528.5,309.5 524.4,297.9" fill="#112000" stroke="#112000" stroke-width="0.6"/>
<polygon points="280.8,370.8 287.4,381.6 284.0,396.9 277.3,386.1" fill="#003940" stroke="#003940" stroke-width="0.6"/>
<polygon points="313.7,205.7 319.7,217.8 301.4,229.6 295.2,217.5" fill="#009ec5" stroke="#009ec5" stroke-width="0.6"/>
<polygon points="472.8,225.6 477.4,237.9 459.8,235.3 455.1,223.1" fill="#005f74" stroke="#005f74" stroke-width="0.6"/>
<polygon points="374.7,180.1 380.2,192.6 359.5,199.1 353.9,186.8" fill="#009cc4" stroke="#009cc4" stroke-width="0.6"/>
<polygon points="516.0,274.2 520.2,286.1 506.5,278.8 502.2,266.9" fill="#003b03" stroke="#003b03" stroke-width="0.6"/>
<polygon points="274.2,333.3 280.8,344.4 274.2,359.9 267.5,348.8" fill="#575d00" stroke="#575d00" stroke-width="0.6"/>
<polygon points="296.8,432.8 303.3,443.1 306.3,457.0 299.8,446.7" fill="#040c00" stroke="#040c00" stroke-width="0.6"/>
<polygon points="284.7,242.7 291.0,254.6 276.4,268.7 269.8,256.9" fill="#00a8a8" stroke="#00a8a8" stroke-width="0.6"/>
<polygon points="276.4,268.7 282.9,280.4 270.6,295.2 263.9,283.7" fill="#001292" stroke="#001292" stroke-width="0.6"/>
<polygon points="493.4,242.8 497.8,254.9 482.0,250.0 477.4,237.9" fill="#005811" stroke="#005811" stroke-width="0.6"/>
<polygon points="295.2,217.5 301.4,229.6 284.7,242.7 278.2,230.7" fill="#0016b9" stroke="#0016b9" stroke-width="0.6"/>
<polygon points="421.2,185.8 426.2,198.3 406.1,200.5 400.9,188.1" fill="#a5a500" stroke="#a5a500" stroke-width="0.6"/>
<polygon points="284.0,396.9 290.5,407.5 290.3,422.3 283.6,411.7" fill="#172500" stroke="#172500" stroke-width="0.6"/>
<polygon points="548.2,330.3 552.2,341.8 543.7,330.5 539.7,319.0" fill="#090500" stroke="#090500" stroke-width="0.6"/>
<polygon points="395.6,175.5 400.9,188.1 380.2,192.6 374.7,180.1" fill="#00b700" stroke="#00b700" stroke-width="0.6"/>
<polygon points="445.5,198.3 450.3,210.8 431.2,210.7 426.2,198.3" fill="#008e50" stroke="#008e50" stroke-width="0.6"/>
<polygon points="327.4,183.0 333.4,195.4 313.7,205.7 307.6,193.4" fill="#00cb72" stroke="#00cb72" stroke-width="0.6"/>
<polygon points="348.1,174.3 353.9,186.8 333.4,195.4 327.4,183.0" fill="#00ca00" stroke="#00ca00" stroke-width="0.6"/>
<polygon points="270.6,295.2 277.2,306.7 267.6,322.0 260.8,310.6" fill="#587900" stroke="#587900" stroke-width="0.6"/>
<polygon points="531.5,295.5 535.6,307.3 524.4,297.9 520.2,286.1" fill="#102000" stroke="#102000" stroke-width="0.6"/>
<polygon points="274.2,359.9 280.8,370.8 277.3,386.1 270.6,375.2" fill="#284000" stroke="#284000" stroke-width="0.6"/>
<polygon points="307.6,193.4 313.7,205.7 295.2,217.5 288.9,205.3" fill="#00c500" stroke="#00c500" stroke-width="0.6"/>
<polygon points="468.2,213.2 472.8,225.6 455.1,223.1 450.3,210.8" fill="#007423" stroke="#007423" stroke-width="0.6"/>
<polygon points="306.3,457.0 312.7,467.2 318.8,480.0 312.4,469.8" fill="#000302" stroke="#000302" stroke-width="0.6"/>
<polygon points="369.2,167.5 374.7,180.1 353.9,186.8 348.1,174.3" fill="#009cc4" stroke="#009cc4" stroke-width="0.6"/>
<polygon points="511.7,262.1 516.0,274.2 502.2,266.9 497.8,254.9" fill="#00313b" stroke="#00313b" stroke-width="0.6"/>
<polygon points="267.6,322.0 274.2,333.3 267.5,348.8 260.7,337.6" fill="#00195d" stroke="#00195d" stroke-width="0.6"/>
<polygon points="290.3,422.3 296.8,432.8 299.8,446.7 293.2,436.3" fill="#050c00" stroke="#050c00" stroke-width="0.6"/>
<polygon points="557.8,354.8 561.7,366.2 556.1,353.2 552.2,341.8" fill="#000501" stroke="#000501" stroke-width="0.6"/>
<polygon points="278.2,230.7 284.7,242.7 269.8,256.9 263.2,245.0" fill="#005ea8" stroke="#005ea8" stroke-width="0.6"/>
<polygon points="269.8,256.9 276.4,268.7 263.9,283.7 257.2,271.9" fill="#5e9200" stroke="#5e9200" stroke-width="0.6"/>
<polygon points="488.9,230.4 493.4,242.8 477.4,237.9 472.8,225.6" fill="#583e00" stroke="#583e00" stroke-width="0.6"/>
<polygon points="288.9,205.3 295.2,217.5 278.2,230.7 271.7,218.6" fill="#0068b9" stroke="#0068b9" stroke-width="0.6"/>
<polygon points="416.0,173.1 421.2,185.8 400.9,188.1 395.6,175.5" fill="#69a500" stroke="#69a500" stroke-width="0.6"/>
<polygon points="277.3,386.1 284.0,396.9 283.6,411.7 276.9,401.0" fill="#000125" stroke="#000125" stroke-width="0.6"/>
<polygon points="544.2,318.6 548.2,330.3 539.7,319.0 535.6,307.3" fill="#000109" stroke="#000109" stroke-width="0.6"/>
<polygon points="390.3,162.8 395.6,175.5 374.7,180.1 369.2,167.5" fill="#0092b7" stroke="#0092b7" stroke-width="0.6"/>
<polygon points="440.6,185.7 445.5,198.3 426.2,198.3 421.2,185.8" fill="#8e0b00" stroke="#8e0b00" stroke-width="0.6"/>
<polygon points="321.5,170.4 327.4,183.0 307.6,193.4 301.4,180.9" fill="#00a2cb" stroke="#00a2cb" stroke-width="0.6"/>
<polygon points="342.3,161.6 348.1,174.3 327.4,183.0 321.5,170.4" fill="#0071ca" stroke="#0071ca" stroke-width="0.6"/>
<polygon points="263.9,283.7 270.6,295.2 260.8,310.6 254.0,299.1" fill="#793900" stroke="#793900" stroke-width="0.6"/>
<polygon points="527.4,283.5 531.5,295.5 520.2,286.1 516.0,274.2" fill="#000720" stroke="#000720" stroke-width="0.6"/>
<polygon points="267.5,348.8 274.2,359.9 270.6,375.2 263.8,364.2" fill="#00401c" stroke="#00401c" stroke-width="0.6"/>
<polygon points="301.4,180.9 307.6,193.4 288.9,205.3 282.5,193.0" fill="#009ec5" stroke="#009ec5" stroke-width="0.6"/>
<polygon points="463.5,200.7 468.2,213.2 450.3,210.8 445.5,198.3" fill="#1b7400" stroke="#1b7400" stroke-width="0.6"/>
<polygon points="363.6,154.8 369.2,167.5 348.1,174.3 342.3,161.6" fill="#c41000" stroke="#c41000" stroke-width="0.6"/>
<polygon points="299.8,446.7 306.3,457.0 312.4,469.8 305.8,459.5" fill="#020300" stroke="#020300" stroke-width="0.6"/>
<polygon points="507.4,249.9 511.7,262.1 497.8,254.9 493.4,242.8" fill="#003b2c" stroke="#003b2c" stroke-width="0.6"/>
<polygon points="260.8,310.6 267.6,322.0 260.7,337.6 253.9,326.3" fill="#00505d" stroke="#00505d" stroke-width="0.6"/>
<polygon points="283.6,411.7 290.3,422.3 293.2,436.3 286.5,425.7" fill="#000a0c" stroke="#000a0c" stroke-width="0.6"/>
<polygon points="271.7,218.6 278.2,230.7 263.2,245.0 256.5,232.9" fill="#0014a8" stroke="#0014a8" stroke-width="0.6"/>
<polygon points="553.9,343.3 557.8,354.8 552.2,341.8 548.2,330.3" fill="#030500" stroke="#030500" stroke-width="0.6"/>
<polygon points="263.2,245.0 269.8,256.9 257.2,271.9 250.4,260.1" fill="#005292" stroke="#005292" stroke-width="0.6"/>
<polygon points="282.5,193.0 288.9,205.3 271.7,218.6 265.1,206.3" fill="#3bb900" stroke="#3bb900" stroke-width="0.6"/>
<polygon points="484.4,218.0 488.9,230.4 472.8,225.6 468.2,213.2" fill="#581100" stroke="#581100" stroke-width="0.6"/>
<polygon points="410.9,160.3 416.0,173.1 395.6,175.5 390.3,162.8" fill="#00a500" stroke="#00a500" stroke-width="0.6"/>
<polygon points="270.6,375.2 277.3,386.1 276.9,401.0 270.1,390.1" fill="#222500" stroke="#222500" stroke-width="0.6"/>
<polygon points="384.8,150.0 390.3,162.8 369.2,167.5 363.6,154.8" fill="#0092b7" stroke="#0092b7" stroke-width="0.6"/>
<polygon points="540.2,306.8 544.2,318.6 535.6,307.3 531.5,295.5" fill="#090200" stroke="#090200" stroke-width="0.6"/>
<polygon points="435.6,173.0 440.6,185.7 421.2,185.8 416.0,173.1" fill="#008e50" stroke="#008e50" stroke-width="0.6"/>
<polygon points="315.4,157.7 321.5,170.4 301.4,180.9 295.1,168.3" fill="#cbcb00" stroke="#cbcb00" stroke-width="0.6"/>
<polygon points="336.5,148.8 342.3,161.6 321.5,170.4 315.4,157.7" fill="#00caca" stroke="#00caca" stroke-width="0.6"/>
<polygon points="257.2,271.9 263.9,283.7 254.0,299.1 247.1,287.5" fill="#007900" stroke="#007900" stroke-width="0.6"/>
<polygon points="260.7,337.6 267.5,348.8 263.8,364.2 256.9,353.0" fill="#0e4000" stroke="#0e4000" stroke-width="0.6"/>
<polygon points="523.2,271.4 527.4,283.5 516.0,274.2 511.7,262.1" fill="#00201d" stroke="#00201d" stroke-width="0.6"/>
<polygon points="295.1,168.3 301.4,180.9 282.5,193.0 276.0,180.4" fill="#c5c500" stroke="#c5c500" stroke-width="0.6"/>
<polygon points="458.7,188.0 463.5,200.7 445.5,198.3 440.6,185.7" fill="#006c74" stroke="#006c74" stroke-width="0.6"/>
<polygon points="357.9,141.9 363.6,154.8 342.3,161.6 336.5,148.8" fill="#006dc4" stroke="#006dc4" stroke-width="0.6"/>
<polygon points="293.2,436.3 299.8,446.7 305.8,459.5 299.2,449.1" fill="#030200" stroke="#030200" stroke-width="0.6"/>
<polygon points="503.0,237.5 507.4,249.9 493.4,242.8 488.9,230.4" fill="#3b2200" stroke="#3b2200" stroke-width="0.6"/>
<polygon points="254.0,299.1 260.8,310.6 253.9,326.3 246.9,314.8" fill="#005d35" stroke="#005d35" stroke-width="0.6"/>
<polygon points="265.1,206.3 271.7,218.6 256.5,232.9 249.7,220.7" fill="#6ca800" stroke="#6ca800" stroke-width="0.6"/>
<polygon points="276.9,401.0 283.6,411.7 286.5,425.7 279.7,415.0" fill="#00010c" stroke="#00010c" stroke-width="0.6"/>
<polygon points="549.9,331.6 553.9,343.3 548.2,330.3 544.2,318.6" fill="#050100" stroke="#050100" stroke-width="0.6"/>
<polygon points="256.5,232.9 263.2,245.0 250.4,260.1 243.5,248.1" fill="#925e00" stroke="#925e00" stroke-width="0.6"/>
<polygon points="276.0,180.4 282.5,193.0 265.1,206.3 258.4,193.9" fill="#0094b9" stroke="#0094b9" stroke-width="0.6"/>
<polygon points="405.6,147.4 410.9,160.3 390.3,162.8 384.8,150.0" fill="#00a5a5" stroke="#00a5a5" stroke-width="0.6"/>
<polygon points="479.8,205.4 484.4,218.0 468.2,213.2 463.5,200.7" fill="#583d00" stroke="#583d00" stroke-width="0.6"/>
<polygon points="263.8,364.2 270.6,375.2 270.1,390.1 263.2,379.1" fill="#001825" stroke="#001825" stroke-width="0.6"/>
<polygon points="379.4,137.0 384.8,150.0 363.6,154.8 357.9,141.9" fill="#0016b7" stroke="#0016b7" stroke-width="0.6"/>
<polygon points="309.3,144.9 315.4,157.7 295.1,168.3 288.8,155.6" fill="#00a2cb" stroke="#00a2cb" stroke-width="0.6"/>
<polygon points="430.6,160.1 435.6,173.0 416.0,173.1 410.9,160.3" fill="#008e8e" stroke="#008e8e" stroke-width="0.6"/>
<polygon points="536.1,294.8 540.2,306.8 531.5,295.5 527.4,283.5" fill="#020900" stroke="#020900" stroke-width="0.6"/>
<polygon points="330.5,135.9 336.5,148.8 315.4,157.7 309.3,144.9" fill="#00ca00" stroke="#00ca00" stroke-width="0.6"/>
<polygon points="250.4,260.1 257.2,271.9 247.1,287.5 240.2,275.7" fill="#007900" stroke="#007900" stroke-width="0.6"/>
<polygon points="253.9,326.3 260.7,337.6 256.9,353.0 249.9,341.8" fill="#004036" stroke="#004036" stroke-width="0.6"/>
<polygon points="518.9,259.2 523.2,271.4 511.7,262.1 507.4,249.9" fill="#00200c" stroke="#00200c" stroke-width="0.6"/>
<polygon points="288.8,155.6 295.1,168.3 276.0,180.4 269.4,167.8" fill="#0018c5" stroke="#0018c5" stroke-width="0.6"/>
<polygon points="352.2,128.8 357.9,141.9 336.5,148.8 330.5,135.9" fill="#0017c4" stroke="#0017c4" stroke-width="0.6"/>
<polygon points="453.9,175.2 458.7,188.0 440.6,185.7 435.6,173.0" fill="#744a00" stroke="#744a00" stroke-width="0.6"/>
<polygon points="286.5,425.7 293.2,436.3 299.2,449.1 292.5,438.6" fill="#000003" stroke="#000003" stroke-width="0.6"/>
<polygon points="498.6,225.0 503.0,237.5 488.9,230.4 484.4,218.0" fill="#00123b" stroke="#00123b" stroke-width="0.6"/>
<polygon points="247.1,287.5 254.0,299.1 246.9,314.8 239.9,303.2" fill="#00265d" stroke="#00265d" stroke-width="0.6"/>
<polygon points="258.4,193.9 265.1,206.3 249.7,220.7 242.8,208.4" fill="#005ea8" stroke="#005ea8" stroke-width="0.6"/>
<polygon points="270.1,390.1 276.9,401.0 279.7,415.0 272.9,404.2" fill="#0c0c00" stroke="#0c0c00" stroke-width="0.6"/>
<polygon points="249.7,220.7 256.5,232.9 243.5,248.1 236.5,235.9" fill="#2f9200" stroke="#2f9200" stroke-width="0.6"/>
<polygon points="545.9,319.8 549.9,331.6 544.2,318.6 540.2,306.8" fill="#000505" stroke="#000505" stroke-width="0.6"/>
<polygon points="269.4,167.8 276.0,180.4 258.4,193.9 251.7,181.3" fill="#b94a00" stroke="#b94a00" stroke-width="0.6"/>
<polygon points="400.3,134.2 405.6,147.4 384.8,150.0 379.4,137.0" fill="#00a5a5" stroke="#00a5a5" stroke-width="0.6"/>
<polygon points="475.2,192.6 479.8,205.4 463.5,200.7 458.7,188.0" fill="#00582e" stroke="#00582e" stroke-width="0.6"/>
<polygon points="373.8,123.8 379.4,137.0 357.9,141.9 352.2,128.8" fill="#0066b7" stroke="#0066b7" stroke-width="0.6"/>
<polygon points="256.9,353.0 263.8,364.2 263.2,379.1 256.3,368.0" fill="#032500" stroke="#032500" stroke-width="0.6"/>
<polygon points="303.1,131.9 309.3,144.9 288.8,155.6 282.3,142.7" fill="#00cb72" stroke="#00cb72" stroke-width="0.6"/>
<polygon points="425.5,147.0 430.6,160.1 410.9,160.3 405.6,147.4" fill="#008e00" stroke="#008e00" stroke-width="0.6"/>
<polygon points="324.5,122.8 330.5,135.9 309.3,144.9 303.1,131.9" fill="#41ca00" stroke="#41ca00" stroke-width="0.6"/>
<polygon points="531.9,282.7 536.1,294.8 527.4,283.5 523.2,271.4" fill="#000409" stroke="#000409" stroke-width="0.6"/>
<polygon points="243.5,248.1 250.4,260.1 240.2,275.7 233.1,263.7" fill="#4d7900" stroke="#4d7900" stroke-width="0.6"/>
<polygon points="282.3,142.7 288.8,155.6 269.4,167.8 262.8,155.0" fill="#c51000" stroke="#c51000" stroke-width="0.6"/>
<polygon points="246.9,314.8 253.9,326.3 249.9,341.8 242.9,330.3" fill="#003740" stroke="#003740" stroke-width="0.6"/>
<polygon points="514.6,246.8 518.9,259.2 507.4,249.9 503.0,237.5" fill="#001e20" stroke="#001e20" stroke-width="0.6"/>
<polygon points="346.4,115.6 352.2,128.8 330.5,135.9 324.5,122.8" fill="#c4c400" stroke="#c4c400" stroke-width="0.6"/>
<polygon points="449.1,162.2 453.9,175.2 435.6,173.0 430.6,160.1" fill="#257400" stroke="#257400" stroke-width="0.6"/>
<polygon points="279.7,415.0 286.5,425.7 292.5,438.6 285.8,427.9" fill="#010300" stroke="#010300" stroke-width="0.6"/>
<polygon points="494.1,212.3 498.6,225.0 484.4,218.0 479.8,205.4" fill="#3b1a00" stroke="#3b1a00" stroke-width="0.6"/>
<polygon points="240.2,275.7 247.1,287.5 239.9,303.2 232.8,291.4" fill="#00385d" stroke="#00385d" stroke-width="0.6"/>
<polygon points="251.7,181.3 258.4,193.9 242.8,208.4 235.9,195.9" fill="#00a800" stroke="#00a800" stroke-width="0.6"/>
<polygon points="263.2,379.1 270.1,390.1 272.9,404.2 266.0,393.2" fill="#030c00" stroke="#030c00" stroke-width="0.6"/>
<polygon points="242.8,208.4 249.7,220.7 236.5,235.9 229.5,223.6" fill="#920c00" stroke="#920c00" stroke-width="0.6"/>
<polygon points="262.8,155.0 269.4,167.8 251.7,181.3 244.8,168.6" fill="#b90f00" stroke="#b90f00" stroke-width="0.6"/>
<polygon points="541.8,307.9 545.9,319.8 540.2,306.8 536.1,294.8" fill="#000505" stroke="#000505" stroke-width="0.6"/>
<polygon points="395.0,121.0 400.3,134.2 379.4,137.0 373.8,123.8" fill="#0014a5" stroke="#0014a5" stroke-width="0.6"/>
<polygon points="470.5,179.7 475.2,192.6 458.7,188.0 453.9,175.2" fill="#00581d" stroke="#00581d" stroke-width="0.6"/>
<polygon points="368.2,110.5 373.8,123.8 352.2,128.8 346.4,115.6" fill="#00b766" stroke="#00b766" stroke-width="0.6"/>
<polygon points="296.8,118.7 303.1,131.9 282.3,142.7 275.8,129.6" fill="#cbcb00" stroke="#cbcb00" stroke-width="0.6"/>
<polygon points="318.5,109.5 324.5,122.8 303.1,131.9 296.8,118.7" fill="#ca8200" stroke="#ca8200" stroke-width="0.6"/>
<polygon points="420.4,133.8 425.5,147.0 405.6,147.4 400.3,134.2" fill="#00728e" stroke="#00728e" stroke-width="0.6"/>
<polygon points="249.9,341.8 256.9,353.0 256.3,368.0 249.2,356.8" fill="#172500" stroke="#172500" stroke-width="0.6"/>
<polygon points="527.7,270.4 531.9,282.7 523.2,271.4 518.9,259.2" fill="#000809" stroke="#000809" stroke-width="0.6"/>
<polygon points="236.5,235.9 243.5,248.1 233.1,263.7 226.0,251.6" fill="#007900" stroke="#007900" stroke-width="0.6"/>
<polygon points="275.8,129.6 282.3,142.7 262.8,155.0 256.1,142.0" fill="#006ec5" stroke="#006ec5" stroke-width="0.6"/>
<polygon points="239.9,303.2 246.9,314.8 242.9,330.3 235.8,318.7" fill="#000040" stroke="#000040" stroke-width="0.6"/>
<polygon points="510.3,234.2 514.6,246.8 503.0,237.5 498.6,225.0" fill="#200800" stroke="#200800" stroke-width="0.6"/>
<polygon points="340.5,102.2 346.4,115.6 324.5,122.8 318.5,109.5" fill="#009cc4" stroke="#009cc4" stroke-width="0.6"/>
<polygon points="444.1,149.0 449.1,162.2 430.6,160.1 425.5,147.0" fill="#740900" stroke="#740900" stroke-width="0.6"/>
<polygon points="489.6,199.5 494.1,212.3 479.8,205.4 475.2,192.6" fill="#003a3b" stroke="#003a3b" stroke-width="0.6"/>
<polygon points="272.9,404.2 279.7,415.0 285.8,427.9 278.9,417.1" fill="#010300" stroke="#010300" stroke-width="0.6"/>
<polygon points="233.1,263.7 240.2,275.7 232.8,291.4 225.6,279.5" fill="#005d00" stroke="#005d00" stroke-width="0.6"/>
<polygon points="244.8,168.6 251.7,181.3 235.9,195.9 228.8,183.2" fill="#6ca800" stroke="#6ca800" stroke-width="0.6"/>
<polygon points="235.9,195.9 242.8,208.4 229.5,223.6 222.3,211.2" fill="#007592" stroke="#007592" stroke-width="0.6"/>
<polygon points="256.3,368.0 263.2,379.1 266.0,393.2 258.9,382.1" fill="#080c00" stroke="#080c00" stroke-width="0.6"/>
<polygon points="256.1,142.0 262.8,155.0 244.8,168.6 237.9,155.7" fill="#0094b9" stroke="#0094b9" stroke-width="0.6"/>
<polygon points="389.5,107.5 395.0,121.0 373.8,123.8 368.2,110.5" fill="#a50d00" stroke="#a50d00" stroke-width="0.6"/>
<polygon points="537.6,295.8 541.8,307.9 536.1,294.8 531.9,282.7" fill="#020500" stroke="#020500" stroke-width="0.6"/>
<polygon points="465.8,166.6 470.5,179.7 453.9,175.2 449.1,162.2" fill="#005831" stroke="#005831" stroke-width="0.6"/>
<polygon points="362.5,97.0 368.2,110.5 346.4,115.6 340.5,102.2" fill="#00b700" stroke="#00b700" stroke-width="0.6"/>
<polygon points="290.4,105.4 296.8,118.7 275.8,129.6 269.3,116.4" fill="#0072cb" stroke="#0072cb" stroke-width="0.6"/>
<polygon points="312.3,96.1 318.5,109.5 296.8,118.7 290.4,105.4" fill="#00ca00" stroke="#00ca00" stroke-width="0.6"/>
<polygon points="415.2,120.4 420.4,133.8 400.3,134.2 395.0,121.0" fill="#008e50" stroke="#008e50" stroke-width="0.6"/>
<polygon points="242.9,330.3 249.9,341.8 249.2,356.8 242.1,345.4" fill="#251f00" stroke="#251f00" stroke-width="0.6"/>
<polygon points="523.5,258.0 527.7,270.4 518.9,259.2 514.6,246.8" fill="#000905" stroke="#000905" stroke-width="0.6"/>
<polygon points="229.5,223.6 236.5,235.9 226.0,251.6 218.8,239.4" fill="#797900" stroke="#797900" stroke-width="0.6"/>
<polygon points="269.3,116.4 275.8,129.6 256.1,142.0 249.3,128.9" fill="#006ec5" stroke="#006ec5" stroke-width="0.6"/>
<polygon points="232.8,291.4 239.9,303.2 235.8,318.7 228.5,307.0" fill="#00402a" stroke="#00402a" stroke-width="0.6"/>
<polygon points="334.6,88.7 340.5,102.2 318.5,109.5 312.3,96.1" fill="#006dc4" stroke="#006dc4" stroke-width="0.6"/>
<polygon points="505.9,221.5 510.3,234.2 498.6,225.0 494.1,212.3" fill="#172000" stroke="#172000" stroke-width="0.6"/>
<polygon points="439.1,135.7 444.1,149.0 425.5,147.0 420.4,133.8" fill="#007400" stroke="#007400" stroke-width="0.6"/>
<polygon points="485.0,186.5 489.6,199.5 475.2,192.6 470.5,179.7" fill="#003b25" stroke="#003b25" stroke-width="0.6"/>
<polygon points="266.0,393.2 272.9,404.2 278.9,417.1 272.0,406.1" fill="#000300" stroke="#000300" stroke-width="0.6"/>
<polygon points="226.0,251.6 233.1,263.7 225.6,279.5 218.3,267.5" fill="#005d00" stroke="#005d00" stroke-width="0.6"/>
<polygon points="237.9,155.7 244.8,168.6 228.8,183.2 221.7,170.4" fill="#00a8a8" stroke="#00a8a8" stroke-width="0.6"/>
<polygon points="228.8,183.2 235.9,195.9 222.3,211.2 215.1,198.6" fill="#5e9200" stroke="#5e9200" stroke-width="0.6"/>
<polygon points="249.3,128.9 256.1,142.0 237.9,155.7 230.9,142.7" fill="#0016b9" stroke="#0016b9" stroke-width="0.6"/>
<polygon points="249.2,356.8 256.3,368.0 258.9,382.1 251.8,370.9" fill="#000c0c" stroke="#000c0c" stroke-width="0.6"/>
<polygon points="384.0,94.0 389.5,107.5 368.2,110.5 362.5,97.0" fill="#00a500" stroke="#00a500" stroke-width="0.6"/>
<polygon points="461.0,153.4 465.8,166.6 449.1,162.2 444.1,149.0" fill="#003158" stroke="#003158" stroke-width="0.6"/>
<polygon points="533.5,283.5 537.6,295.8 531.9,282.7 527.7,270.4" fill="#000105" stroke="#000105" stroke-width="0.6"/>
<polygon points="356.8,83.4 362.5,97.0 340.5,102.2 334.6,88.7" fill="#75b700" stroke="#75b700" stroke-width="0.6"/>
<polygon points="284.0,92.0 290.4,105.4 269.3,116.4 262.6,103.0" fill="#00cb00" stroke="#00cb00" stroke-width="0.6"/>
<polygon points="306.1,82.6 312.3,96.1 290.4,105.4 284.0,92.0" fill="#00ca71" stroke="#00ca71" stroke-width="0.6"/>
<polygon points="409.9,106.9 415.2,120.4 395.0,121.0 389.5,107.5" fill="#8e0b00" stroke="#8e0b00" stroke-width="0.6"/>
<polygon points="235.8,318.7 242.9,330.3 242.1,345.4 234.9,333.8" fill="#132500" stroke="#132500" stroke-width="0.6"/>
<polygon points="222.3,211.2 229.5,223.6 218.8,239.4 211.4,227.0" fill="#007979" stroke="#007979" stroke-width="0.6"/>
<polygon points="519.2,245.4 523.5,258.0 514.6,246.8 510.3,234.2" fill="#030900" stroke="#030900" stroke-width="0.6"/>
<polygon points="262.6,103.0 269.3,116.4 249.3,128.9 242.4,115.6" fill="#009ec5" stroke="#009ec5" stroke-width="0.6"/>
<polygon points="328.6,75.0 334.6,88.7 312.3,96.1 306.1,82.6" fill="#00c400" stroke="#00c400" stroke-width="0.6"/>
<polygon points="225.6,279.5 232.8,291.4 228.5,307.0 221.2,295.2" fill="#3d4000" stroke="#3d4000" stroke-width="0.6"/>
<polygon points="501.4,208.6 505.9,221.5 494.1,212.3 489.6,199.5" fill="#002001" stroke="#002001" stroke-width="0.6"/>
<polygon points="434.1,122.2 439.1,135.7 420.4,133.8 415.2,120.4" fill="#007441" stroke="#007441" stroke-width="0.6"/>
<polygon points="480.3,173.4 485.0,186.5 470.5,179.7 465.8,166.6" fill="#3b2400" stroke="#3b2400" stroke-width="0.6"/>
<polygon points="218.8,239.4 226.0,251.6 218.3,267.5 210.9,255.3" fill="#1e5d00" stroke="#1e5d00" stroke-width="0.6"/>
<polygon points="258.9,382.1 266.0,393.2 272.0,406.1 265.0,395.0" fill="#000103" stroke="#000103" stroke-width="0.6"/>
<polygon points="230.9,142.7 237.9,155.7 221.7,170.4 214.5,157.4" fill="#a80d00" stroke="#a80d00" stroke-width="0.6"/>
<polygon points="221.7,170.4 228.8,183.2 215.1,198.6 207.8,185.9" fill="#005292" stroke="#005292" stroke-width="0.6"/>
<polygon points="242.4,115.6 249.3,128.9 230.9,142.7 223.8,129.5" fill="#b94a00" stroke="#b94a00" stroke-width="0.6"/>
<polygon points="378.5,80.2 384.0,94.0 362.5,97.0 356.8,83.4" fill="#00a5a5" stroke="#00a5a5" stroke-width="0.6"/>
<polygon points="242.1,345.4 249.2,356.8 251.8,370.9 244.7,359.5" fill="#000c06" stroke="#000c06" stroke-width="0.6"/>
<polygon points="351.0,69.6 356.8,83.4 334.6,88.7 328.6,75.0" fill="#0066b7" stroke="#0066b7" stroke-width="0.6"/>
<polygon points="456.1,140.0 461.0,153.4 444.1,149.0 439.1,135.7" fill="#585800" stroke="#585800" stroke-width="0.6"/>
<polygon points="529.2,271.1 533.5,283.5 527.7,270.4 523.5,258.0" fill="#010500" stroke="#010500" stroke-width="0.6"/>
<polygon points="404.6,93.2 409.9,106.9 389.5,107.5 384.0,94.0" fill="#8e5b00" stroke="#8e5b00" stroke-width="0.6"/>
<polygon points="228.5,307.0 235.8,318.7 234.9,333.8 227.5,322.1" fill="#142500" stroke="#142500" stroke-width="0.6"/>
<polygon points="215.1,198.6 222.3,211.2 211.4,227.0 204.0,214.4" fill="#797900" stroke="#797900" stroke-width="0.6"/>
<polygon points="514.8,232.7 519.2,245.4 510.3,234.2 505.9,221.5" fill="#000901" stroke="#000901" stroke-width="0.6"/>
<polygon points="218.3,267.5 225.6,279.5 221.2,295.2 213.8,283.2" fill="#004040" stroke="#004040" stroke-width="0.6"/>
<polygon points="429.0,108.6 434.1,122.2 415.2,120.4 409.9,106.9" fill="#007400" stroke="#007400" stroke-width="0.6"/>
<polygon points="496.9,195.6 501.4,208.6 489.6,199.5 485.0,186.5" fill="#1c2000" stroke="#1c2000" stroke-width="0.6"/>
<polygon points="475.6,160.1 480.3,173.4 465.8,166.6 461.0,153.4" fill="#003b21" stroke="#003b21" stroke-width="0.6"/>
<polygon points="223.8,129.5 230.9,142.7 214.5,157.4 207.2,144.3" fill="#a8a800" stroke="#a8a800" stroke-width="0.6"/>
<polygon points="211.4,227.0 218.8,239.4 210.9,255.3 203.5,242.9" fill="#005d5d" stroke="#005d5d" stroke-width="0.6"/>
<polygon points="251.8,370.9 258.9,382.1 265.0,395.0 257.8,383.8" fill="#010300" stroke="#010300" stroke-width="0.6"/>
<polygon points="214.5,157.4 221.7,170.4 207.8,185.9 200.4,172.9" fill="#929200" stroke="#929200" stroke-width="0.6"/>
<polygon points="372.9,66.3 378.5,80.2 356.8,83.4 351.0,69.6" fill="#a5a500" stroke="#a5a500" stroke-width="0.6"/>
<polygon points="234.9,333.8 242.1,345.4 244.7,359.5 237.4,348.0" fill="#000c0c" stroke="#000c0c" stroke-width="0.6"/>
<polygon points="451.2,126.4 456.1,140.0 439.1,135.7 434.1,122.2" fill="#005858" stroke="#005858" stroke-width="0.6"/>
<polygon points="399.2,79.3 404.6,93.2 384.0,94.0 378.5,80.2" fill="#008e50" stroke="#008e50" stroke-width="0.6"/>
<polygon points="524.9,258.5 529.2,271.1 523.5,258.0 519.2,245.4" fill="#050200" stroke="#050200" stroke-width="0.6"/>
<polygon points="221.2,295.2 228.5,307.0 227.5,322.1 220.1,310.3" fill="#000a25" stroke="#000a25" stroke-width="0.6"/>
<polygon points="207.8,185.9 215.1,198.6 204.0,214.4 196.5,201.7" fill="#007944" stroke="#007944" stroke-width="0.6"/>
<polygon points="510.4,219.8 514.8,232.7 505.9,221.5 501.4,208.6" fill="#000908" stroke="#000908" stroke-width="0.6"/>
<polygon points="210.9,255.3 218.3,267.5 213.8,283.2 206.3,271.0" fill="#004040" stroke="#004040" stroke-width="0.6"/>
<polygon points="423.8,94.8 429.0,108.6 409.9,106.9 404.6,93.2" fill="#740900" stroke="#740900" stroke-width="0.6"/>
<polygon points="492.3,182.4 496.9,195.6 485.0,186.5 480.3,173.4" fill="#001e20" stroke="#001e20" stroke-width="0.6"/>
<polygon points="470.8,146.6 475.6,160.1 461.0,153.4 456.1,140.0" fill="#00213b" stroke="#00213b" stroke-width="0.6"/>
<polygon points="204.0,214.4 211.4,227.0 203.5,242.9 195.9,230.4" fill="#5d2500" stroke="#5d2500" stroke-width="0.6"/>
<polygon points="244.7,359.5 251.8,370.9 257.8,383.8 250.6,372.4" fill="#000301" stroke="#000301" stroke-width="0.6"/>
<polygon points="207.2,144.3 214.5,157.4 200.4,172.9 192.9,159.9" fill="#009200" stroke="#009200" stroke-width="0.6"/>
<polygon points="227.5,322.1 234.9,333.8 237.4,348.0 230.0,336.3" fill="#0c0100" stroke="#0c0100" stroke-width="0.6"/>
<polygon points="446.2,112.7 451.2,126.4 434.1,122.2 429.0,108.6" fill="#582300" stroke="#582300" stroke-width="0.6"/>
<polygon points="393.8,65.3 399.2,79.3 378.5,80.2 372.9,66.3" fill="#008e00" stroke="#008e00" stroke-width="0.6"/>
<polygon points="520.6,245.7 524.9,258.5 519.2,245.4 514.8,232.7" fill="#050000" stroke="#050000" stroke-width="0.6"/>
<polygon points="213.8,283.2 221.2,295.2 220.1,310.3 212.6,298.3" fill="#000d25" stroke="#000d25" stroke-width="0.6"/>
<polygon points="200.4,172.9 207.8,185.9 196.5,201.7 189.0,188.9" fill="#006079" stroke="#006079" stroke-width="0.6"/>
<polygon points="505.9,206.7 510.4,219.8 501.4,208.6 496.9,195.6" fill="#090800" stroke="#090800" stroke-width="0.6"/>
<polygon points="203.5,242.9 210.9,255.3 206.3,271.0 198.7,258.7" fill="#004000" stroke="#004000" stroke-width="0.6"/>
<polygon points="418.5,80.8 423.8,94.8 404.6,93.2 399.2,79.3" fill="#740900" stroke="#740900" stroke-width="0.6"/>
<polygon points="487.7,169.0 492.3,182.4 480.3,173.4 475.6,160.1" fill="#172000" stroke="#172000" stroke-width="0.6"/>
<polygon points="466.0,132.9 470.8,146.6 456.1,140.0 451.2,126.4" fill="#3b0500" stroke="#3b0500" stroke-width="0.6"/>
<polygon points="196.5,201.7 204.0,214.4 195.9,230.4 188.3,217.8" fill="#5d0700" stroke="#5d0700" stroke-width="0.6"/>
<polygon points="237.4,348.0 244.7,359.5 250.6,372.4 243.3,360.9" fill="#000103" stroke="#000103" stroke-width="0.6"/>
<polygon points="441.1,98.8 446.2,112.7 429.0,108.6 423.8,94.8" fill="#005800" stroke="#005800" stroke-width="0.6"/>
<polygon points="220.1,310.3 227.5,322.1 230.0,336.3 222.5,324.5" fill="#00030c" stroke="#00030c" stroke-width="0.6"/>
<polygon points="516.2,232.8 520.6,245.7 514.8,232.7 510.4,219.8" fill="#000505" stroke="#000505" stroke-width="0.6"/>
<polygon points="192.9,159.9 200.4,172.9 189.0,188.9 181.3,175.9" fill="#007944" stroke="#007944" stroke-width="0.6"/>
<polygon points="206.3,271.0 213.8,283.2 212.6,298.3 205.0,286.1" fill="#001b25" stroke="#001b25" stroke-width="0.6"/>
<polygon points="501.4,193.5 505.9,206.7 496.9,195.6 492.3,182.4" fill="#020900" stroke="#020900" stroke-width="0.6"/>
<polygon points="195.9,230.4 203.5,242.9 198.7,258.7 191.0,246.2" fill="#401a00" stroke="#401a00" stroke-width="0.6"/>
<polygon points="413.2,66.6 418.5,80.8 399.2,79.3 393.8,65.3" fill="#744a00" stroke="#744a00" stroke-width="0.6"/>
<polygon points="483.0,155.5 487.7,169.0 475.6,160.1 470.8,146.6" fill="#002004" stroke="#002004" stroke-width="0.6"/>
<polygon points="461.1,119.1 466.0,132.9 451.2,126.4 446.2,112.7" fill="#00073b" stroke="#00073b" stroke-width="0.6"/>
<polygon points="189.0,188.9 196.5,201.7 188.3,217.8 180.5,204.9" fill="#005d5d" stroke="#005d5d" stroke-width="0.6"/>
<polygon points="230.0,336.3 237.4,348.0 243.3,360.9 235.9,349.2" fill="#000302" stroke="#000302" stroke-width="0.6"/>
<polygon points="436.0,84.7 441.1,98.8 423.8,94.8 418.5,80.8" fill="#005800" stroke="#005800" stroke-width="0.6"/>
<polygon points="212.6,298.3 220.1,310.3 222.5,324.5 214.9,312.5" fill="#000c0c" stroke="#000c0c" stroke-width="0.6"/>
<polygon points="511.7,219.8 516.2,232.8 510.4,219.8 505.9,206.7" fill="#000505" stroke="#000505" stroke-width="0.6"/>
<polygon points="198.7,258.7 206.3,271.0 205.0,286.1 197.3,273.8" fill="#000425" stroke="#000425" stroke-width="0.6"/>
<polygon points="496.8,180.1 501.4,193.5 492.3,182.4 487.7,169.0" fill="#000909" stroke="#000909" stroke-width="0.6"/>
<polygon points="188.3,217.8 195.9,230.4 191.0,246.2 183.2,233.6" fill="#004024" stroke="#004024" stroke-width="0.6"/>
<polygon points="478.2,141.8 483.0,155.5 470.8,146.6 466.0,132.9" fill="#001a20" stroke="#001a20" stroke-width="0.6"/>
<polygon points="456.2,105.1 461.1,119.1 446.2,112.7 441.1,98.8" fill="#3b3b00" stroke="#3b3b00" stroke-width="0.6"/>
<polygon points="181.3,175.9 189.0,188.9 180.5,204.9 172.6,192.0" fill="#00345d" stroke="#00345d" stroke-width="0.6"/>
<polygon points="222.5,324.5 230.0,336.3 235.9,349.2 228.4,337.4" fill="#000103" stroke="#000103" stroke-width="0.6"/>
<polygon points="430.8,70.4 436.0,84.7 418.5,80.8 413.2,66.6" fill="#582300" stroke="#582300" stroke-width="0.6"/>
<polygon points="205.0,286.1 212.6,298.3 214.9,312.5 207.3,300.4" fill="#00060c" stroke="#00060c" stroke-width="0.6"/>
<polygon points="507.2,206.5 511.7,219.8 505.9,206.7 501.4,193.5" fill="#050200" stroke="#050200" stroke-width="0.6"/>
<polygon points="191.0,246.2 198.7,258.7 197.3,273.8 189.5,261.4" fill="#250f00" stroke="#250f00" stroke-width="0.6"/>
<polygon points="492.1,166.5 496.8,180.1 487.7,169.0 483.0,155.5" fill="#040900" stroke="#040900" stroke-width="0.6"/>
<polygon points="180.5,204.9 188.3,217.8 183.2,233.6 175.3,220.8" fill="#004040" stroke="#004040" stroke-width="0.6"/>
<polygon points="473.4,127.9 478.2,141.8 466.0,132.9 461.1,119.1" fill="#002012" stroke="#002012" stroke-width="0.6"/>
<polygon points="451.2,90.9 456.2,105.1 441.1,98.8 436.0,84.7" fill="#003b21" stroke="#003b21" stroke-width="0.6"/>
<polygon points="214.9,312.5 222.5,324.5 228.4,337.4 220.8,325.4" fill="#000103" stroke="#000103" stroke-width="0.6"/>
<polygon points="197.3,273.8 205.0,286.1 207.3,300.4 199.5,288.1" fill="#000c08" stroke="#000c08" stroke-width="0.6"/>
<polygon points="502.6,193.1 507.2,206.5 501.4,193.5 496.8,180.1" fill="#000500" stroke="#000500" stroke-width="0.6"/>
<polygon points="183.2,233.6 191.0,246.2 189.5,261.4 181.6,248.8" fill="#002514" stroke="#002514" stroke-width="0.6"/>
<polygon points="487.4,152.7 492.1,166.5 483.0,155.5 478.2,141.8" fill="#000906" stroke="#000906" stroke-width="0.6"/>
<polygon points="172.6,192.0 180.5,204.9 175.3,220.8 167.3,207.8" fill="#004040" stroke="#004040" stroke-width="0.6"/>
<polygon points="468.5,113.8 473.4,127.9 461.1,119.1 456.2,105.1" fill="#002000" stroke="#002000" stroke-width="0.6"/>
<polygon points="446.1,76.5 451.2,90.9 436.0,84.7 430.8,70.4" fill="#3b3b00" stroke="#3b3b00" stroke-width="0.6"/>
<polygon points="207.3,300.4 214.9,312.5 220.8,325.4 213.1,313.3" fill="#030300" stroke="#030300" stroke-width="0.6"/>
<polygon points="189.5,261.4 197.3,273.8 199.5,288.1 191.6,275.6" fill="#000c02" stroke="#000c02" stroke-width="0.6"/>
<polygon points="175.3,220.8 183.2,233.6 181.6,248.8 173.6,236.0" fill="#002514" stroke="#002514" stroke-width="0.6"/>
<polygon points="497.9,179.4 502.6,193.1 496.8,180.1 492.1,166.5" fill="#000405" stroke="#000405" stroke-width="0.6"/>
<polygon points="482.6,138.8 487.4,152.7 478.2,141.8 473.4,127.9" fill="#000907" stroke="#000907" stroke-width="0.6"/>
<polygon points="463.6,99.5 468.5,113.8 456.2,105.1 451.2,90.9" fill="#002012" stroke="#002012" stroke-width="0.6"/>
<polygon points="199.5,288.1 207.3,300.4 213.1,313.3 205.3,301.0" fill="#000302" stroke="#000302" stroke-width="0.6"/>
<polygon points="181.6,248.8 189.5,261.4 191.6,275.6 183.6,263.0" fill="#0c0500" stroke="#0c0500" stroke-width="0.6"/>
<polygon points="167.3,207.8 175.3,220.8 173.6,236.0 165.5,223.0" fill="#002514" stroke="#002514" stroke-width="0.6"/>
<polygon points="493.2,165.6 497.9,179.4 492.1,166.5 487.4,152.7" fill="#050100" stroke="#050100" stroke-width="0.6"/>
<polygon points="477.8,124.6 482.6,138.8 473.4,127.9 468.5,113.8" fill="#090500" stroke="#090500" stroke-width="0.6"/>
<polygon points="458.6,85.0 463.6,99.5 451.2,90.9 446.1,76.5" fill="#000420" stroke="#000420" stroke-width="0.6"/>
<polygon points="191.6,275.6 199.5,288.1 205.3,301.0 197.4,288.5" fill="#000300" stroke="#000300" stroke-width="0.6"/>
<polygon points="173.6,236.0 181.6,248.8 183.6,263.0 175.6,250.2" fill="#000c00" stroke="#000c00" stroke-width="0.6"/>
<polygon points="488.4,151.7 493.2,165.6 487.4,152.7 482.6,138.8" fill="#000105" stroke="#000105" stroke-width="0.6"/>
<polygon points="472.9,110.3 477.8,124.6 468.5,113.8 463.6,99.5" fill="#000900" stroke="#000900" stroke-width="0.6"/>
<polygon points="183.6,263.0 191.6,275.6 197.4,288.5 189.4,275.8" fill="#000301" stroke="#000301" stroke-width="0.6"/>
<polygon points="165.5,223.0 173.6,236.0 175.6,250.2 167.4,237.2" fill="#00010c" stroke="#00010c" stroke-width="0.6"/>
<polygon points="483.6,137.5 488.4,151.7 482.6,138.8 477.8,124.6" fill="#050500" stroke="#050500" stroke-width="0.6"/>
<polygon points="467.9,95.8 472.9,110.3 463.6,99.5 458.6,85.0" fill="#000109" stroke="#000109" stroke-width="0.6"/>
<polygon points="175.6,250.2 183.6,263.0 189.4,275.8 181.3,263.0" fill="#000301" stroke="#000301" stroke-width="0.6"/>
<polygon points="478.7,123.1 483.6,137.5 477.8,124.6 472.9,110.3" fill="#000503" stroke="#000503" stroke-width="0.6"/>
<polygon points="167.4,237.2 175.6,250.2 181.3,263.0 173.0,250.0" fill="#000103" stroke="#000103" stroke-width="0.6"/>
<polygon points="473.7,108.5 478.7,123.1 472.9,110.3 467.9,95.8" fill="#050500" stroke="#050500" stroke-width="0.6"/>
<polygon points="282.5,88.6 281.0,85.3 257.7,97.4 260.2,100.2" fill="#9b3e00" stroke="#9b3e00" stroke-width="0.6"/>
<polygon points="305.6,78.8 305.1,75.1 281.0,85.3 282.5,88.6" fill="#9b9b00" stroke="#9b9b00" stroke-width="0.6"/>
<polygon points="260.2,100.2 257.7,97.4 235.8,111.1 239.1,113.4" fill="#009b57" stroke="#009b57" stroke-width="0.6"/>
<polygon points="329.1,70.9 329.6,66.9 305.1,75.1 305.6,78.8" fill="#009b57" stroke="#009b57" stroke-width="0.6"/>
<polygon points="284.0,92.0 282.5,88.6 260.2,100.2 262.6,103.0" fill="#009b00" stroke="#009b00" stroke-width="0.6"/>
<polygon points="306.1,82.6 305.6,78.8 282.5,88.6 284.0,92.0" fill="#009b57" stroke="#009b57" stroke-width="0.6"/>
<polygon points="262.6,103.0 260.2,100.2 239.1,113.4 242.4,115.6" fill="#00579b" stroke="#00579b" stroke-width="0.6"/>
<polygon points="239.1,113.4 235.8,111.1 215.5,126.1 219.6,127.8" fill="#329b00" stroke="#329b00" stroke-width="0.6"/>
<polygon points="328.6,75.0 329.1,70.9 305.6,78.8 306.1,82.6" fill="#009b00" stroke="#009b00" stroke-width="0.6"/>
<polygon points="352.5,65.2 354.0,60.9 329.6,66.9 329.1,70.9" fill="#639b00" stroke="#639b00" stroke-width="0.6"/>
<polygon points="242.4,115.6 239.1,113.4 219.6,127.8 223.8,129.5" fill="#9b3e00" stroke="#9b3e00" stroke-width="0.6"/>
<polygon points="351.0,69.6 352.5,65.2 329.1,70.9 328.6,75.0" fill="#00579b" stroke="#00579b" stroke-width="0.6"/>
<polygon points="219.6,127.8 215.5,126.1 197.3,142.3 202.2,143.3" fill="#9b6300" stroke="#9b6300" stroke-width="0.6"/>
<polygon points="375.4,61.7 377.9,57.2 354.0,60.9 352.5,65.2" fill="#009b57" stroke="#009b57" stroke-width="0.6"/>
<polygon points="223.8,129.5 219.6,127.8 202.2,143.3 207.2,144.3" fill="#9b9b00" stroke="#9b9b00" stroke-width="0.6"/>
<polygon points="372.9,66.3 375.4,61.7 352.5,65.2 351.0,69.6" fill="#9b9b00" stroke="#9b9b00" stroke-width="0.6"/>
<polygon points="202.2,143.3 197.3,142.3 181.6,159.3 187.2,159.6" fill="#00579b" stroke="#00579b" stroke-width="0.6"/>
<polygon points="397.2,60.6 400.7,56.0 377.9,57.2 375.4,61.7" fill="#00139b" stroke="#00139b" stroke-width="0.6"/>
<polygon points="207.2,144.3 202.2,143.3 187.2,159.6 192.9,159.9" fill="#009b00" stroke="#009b00" stroke-width="0.6"/>
<polygon points="393.8,65.3 397.2,60.6 375.4,61.7 372.9,66.3" fill="#009b00" stroke="#009b00" stroke-width="0.6"/>
<polygon points="187.2,159.6 181.6,159.3 168.8,176.7 175.0,176.3" fill="#009b9b" stroke="#009b9b" stroke-width="0.6"/>
<polygon points="417.6,62.0 422.0,57.4 400.7,56.0 397.2,60.6" fill="#00579b" stroke="#00579b" stroke-width="0.6"/>
<polygon points="192.9,159.9 187.2,159.6 175.0,176.3 181.3,175.9" fill="#009b57" stroke="#009b57" stroke-width="0.6"/>
<polygon points="413.2,66.6 417.6,62.0 397.2,60.6 393.8,65.3" fill="#9b6300" stroke="#9b6300" stroke-width="0.6"/>
<polygon points="175.0,176.3 168.8,176.7 159.2,194.3 165.9,193.1" fill="#329b00" stroke="#329b00" stroke-width="0.6"/>
<polygon points="436.1,65.9 441.4,61.4 422.0,57.4 417.6,62.0" fill="#009b57" stroke="#009b57" stroke-width="0.6"/>
<polygon points="181.3,175.9 175.0,176.3 165.9,193.1 172.6,192.0" fill="#007c9b" stroke="#007c9b" stroke-width="0.6"/>
<polygon points="430.8,70.4 436.1,65.9 417.6,62.0 413.2,66.6" fill="#9b3e00" stroke="#9b3e00" stroke-width="0.6"/>
<polygon points="165.9,193.1 159.2,194.3 153.2,211.7 160.2,209.7" fill="#9b6300" stroke="#9b6300" stroke-width="0.6"/>
<polygon points="172.6,192.0 165.9,193.1 160.2,209.7 167.3,207.8" fill="#007c9b" stroke="#007c9b" stroke-width="0.6"/>
<polygon points="452.1,72.3 458.2,68.1 441.4,61.4 436.1,65.9" fill="#9b6300" stroke="#9b6300" stroke-width="0.6"/>
<polygon points="446.1,76.5 452.1,72.3 436.1,65.9 430.8,70.4" fill="#9b9b00" stroke="#9b9b00" stroke-width="0.6"/>
<polygon points="160.2,209.7 153.2,211.7 151.0,228.4 158.2,225.7" fill="#639b00" stroke="#639b00" stroke-width="0.6"/>
<polygon points="167.3,207.8 160.2,209.7 158.2,225.7 165.5,223.0" fill="#009b00" stroke="#009b00" stroke-width="0.6"/>
<polygon points="465.3,81.1 472.1,77.3 458.2,68.1 452.1,72.3" fill="#009b9b" stroke="#009b9b" stroke-width="0.6"/>
<polygon points="458.6,85.0 465.3,81.1 452.1,72.3 446.1,76.5" fill="#00139b" stroke="#00139b" stroke-width="0.6"/>
<polygon points="158.2,225.7 151.0,228.4 152.8,244.0 160.1,240.6" fill="#639b00" stroke="#639b00" stroke-width="0.6"/>
<polygon points="165.5,223.0 158.2,225.7 160.1,240.6 167.4,237.2" fill="#9b6300" stroke="#9b6300" stroke-width="0.6"/>
<polygon points="475.2,92.3 482.5,88.9 472.1,77.3 465.3,81.1" fill="#007c9b" stroke="#007c9b" stroke-width="0.6"/>
<polygon points="467.9,95.8 475.2,92.3 465.3,81.1 458.6,85.0" fill="#9b3e00" stroke="#9b3e00" stroke-width="0.6"/>
<polygon points="167.4,237.2 160.1,240.6 165.9,254.1 173.0,250.0" fill="#9b6300" stroke="#9b6300" stroke-width="0.6"/>
<polygon points="160.1,240.6 152.8,244.0 158.8,258.2 165.9,254.1" fill="#9b9b00" stroke="#9b9b00" stroke-width="0.6"/>
<polygon points="473.7,108.5 481.4,105.7 475.2,92.3 467.9,95.8" fill="#9b0c00" stroke="#9b0c00" stroke-width="0.6"/>
<polygon points="481.4,105.7 489.1,102.8 482.5,88.9 475.2,92.3" fill="#329b00" stroke="#329b00" stroke-width="0.6"/>
<polygon points="173.0,250.0 165.9,254.1 175.8,265.7 182.5,261.0" fill="#329b00" stroke="#329b00" stroke-width="0.6"/>
<polygon points="165.9,254.1 158.8,258.2 169.0,270.4 175.8,265.7" fill="#009b57" stroke="#009b57" stroke-width="0.6"/>
<polygon points="475.7,123.1 483.6,120.9 481.4,105.7 473.7,108.5" fill="#329b00" stroke="#329b00" stroke-width="0.6"/>
<polygon points="483.6,120.9 491.5,118.8 489.1,102.8 481.4,105.7" fill="#00139b" stroke="#00139b" stroke-width="0.6"/>
<polygon points="182.5,261.0 175.8,265.7 189.5,275.1 195.6,269.9" fill="#009b00" stroke="#009b00" stroke-width="0.6"/>
<polygon points="175.8,265.7 169.0,270.4 183.3,280.4 189.5,275.1" fill="#009b9b" stroke="#009b9b" stroke-width="0.6"/>
<polygon points="473.8,139.1 481.6,137.8 483.6,120.9 475.7,123.1" fill="#9b3e00" stroke="#9b3e00" stroke-width="0.6"/>
<polygon points="481.6,137.8 489.6,136.4 491.5,118.8 483.6,120.9" fill="#9b6300" stroke="#9b6300" stroke-width="0.6"/>
<polygon points="195.6,269.9 189.5,275.1 206.9,282.0 212.2,276.4" fill="#009b00" stroke="#009b00" stroke-width="0.6"/>
<polygon points="467.7,156.3 475.4,155.8 481.6,137.8 473.8,139.1" fill="#329b00" stroke="#329b00" stroke-width="0.6"/>
<polygon points="189.5,275.1 183.3,280.4 201.5,287.6 206.9,282.0" fill="#009b9b" stroke="#009b9b" stroke-width="0.6"/>
<polygon points="475.4,155.8 483.1,155.2 489.6,136.4 481.6,137.8" fill="#009b9b" stroke="#009b9b" stroke-width="0.6"/>
<polygon points="212.2,276.4 206.9,282.0 227.5,286.0 231.9,280.1" fill="#009b57" stroke="#009b57" stroke-width="0.6"/>
<polygon points="457.5,174.1 464.8,174.4 475.4,155.8 467.7,156.3" fill="#009b00" stroke="#009b00" stroke-width="0.6"/>
<polygon points="206.9,282.0 201.5,287.6 223.1,291.8 227.5,286.0" fill="#009b00" stroke="#009b00" stroke-width="0.6"/>
<polygon points="464.8,174.4 472.1,174.8 483.1,155.2 475.4,155.8" fill="#009b57" stroke="#009b57" stroke-width="0.6"/>
<polygon points="231.9,280.1 227.5,286.0 251.0,286.9 254.3,280.9" fill="#009b57" stroke="#009b57" stroke-width="0.6"/>
<polygon points="443.5,192.0 450.1,193.3 464.8,174.4 457.5,174.1" fill="#009b57" stroke="#009b57" stroke-width="0.6"/>
<polygon points="227.5,286.0 223.1,291.8 247.7,292.8 251.0,286.9" fill="#00579b" stroke="#00579b" stroke-width="0.6"/>
<polygon points="450.1,193.3 456.7,194.6 472.1,174.8 464.8,174.4" fill="#00579b" stroke="#00579b" stroke-width="0.6"/>
<polygon points="254.3,280.9 251.0,286.9 276.7,284.6 278.7,278.7" fill="#009b00" stroke="#009b00" stroke-width="0.6"/>
<polygon points="425.9,209.5 431.6,211.8 450.1,193.3 443.5,192.0" fill="#009b9b" stroke="#009b9b" stroke-width="0.6"/>
<polygon points="251.0,286.9 247.7,292.8 274.6,290.5 276.7,284.6" fill="#00579b" stroke="#00579b" stroke-width="0.6"/>
<polygon points="431.6,211.8 437.3,214.0 456.7,194.6 450.1,193.3" fill="#009b00" stroke="#009b00" stroke-width="0.6"/>
<polygon points="278.7,278.7 276.7,284.6 303.8,279.1 304.5,273.4" fill="#009b57" stroke="#009b57" stroke-width="0.6"/>
<polygon points="405.2,226.1 409.8,229.3 431.6,211.8 425.9,209.5" fill="#9b9b00" stroke="#9b9b00" stroke-width="0.6"/>
<polygon points="276.7,284.6 274.6,290.5 303.1,284.8 303.8,279.1" fill="#00579b" stroke="#00579b" stroke-width="0.6"/>
<polygon points="304.5,273.4 303.8,279.1 331.5,270.5 330.8,265.3" fill="#009b57" stroke="#009b57" stroke-width="0.6"/>
<polygon points="409.8,229.3 414.5,232.4 437.3,214.0 431.6,211.8" fill="#009b9b" stroke="#009b9b" stroke-width="0.6"/>
<polygon points="382.0,241.3 385.4,245.2 409.8,229.3 405.2,226.1" fill="#009b00" stroke="#009b00" stroke-width="0.6"/>
<polygon points="330.8,265.3 331.5,270.5 359.0,259.1 356.9,254.5" fill="#00139b" stroke="#00139b" stroke-width="0.6"/>
<polygon points="356.9,254.5 359.0,259.1 385.4,245.2 382.0,241.3" fill="#009b00" stroke="#009b00" stroke-width="0.6"/>
<polygon points="303.8,279.1 303.1,284.8 332.2,275.8 331.5,270.5" fill="#009b00" stroke="#009b00" stroke-width="0.6"/>
<polygon points="385.4,245.2 388.8,249.2 414.5,232.4 409.8,229.3" fill="#9b6300" stroke="#9b6300" stroke-width="0.6"/>
<polygon points="331.5,270.5 332.2,275.8 361.1,263.8 359.0,259.1" fill="#009b9b" stroke="#009b9b" stroke-width="0.6"/>
<polygon points="359.0,259.1 361.1,263.8 388.8,249.2 385.4,245.2" fill="#009b9b" stroke="#009b9b" stroke-width="0.6"/>
<polygon points="310.7,494.0 317.7,504.7 327.6,517.3 320.7,506.5" fill="#021700" stroke="#021700" stroke-width="0.6"/>
<polygon points="580.7,384.8 584.8,396.9 581.8,381.1 577.8,369.0" fill="#1b1100" stroke="#1b1100" stroke-width="0.6"/>
<polygon points="303.7,483.1 310.7,494.0 320.7,506.5 313.7,495.7" fill="#000917" stroke="#000917" stroke-width="0.6"/>
<polygon points="576.6,372.6 580.7,384.8 577.8,369.0 573.7,356.7" fill="#00191b" stroke="#00191b" stroke-width="0.6"/>
<polygon points="320.7,506.5 327.6,517.3 340.6,527.8 333.8,517.1" fill="#003100" stroke="#003100" stroke-width="0.6"/>
<polygon points="580.1,401.8 584.2,413.8 584.8,396.9 580.7,384.8" fill="#003500" stroke="#003500" stroke-width="0.6"/>
<polygon points="296.6,472.1 303.7,483.1 313.7,495.7 306.6,484.7" fill="#000317" stroke="#000317" stroke-width="0.6"/>
<polygon points="572.5,360.2 576.6,372.6 573.7,356.7 569.5,344.3" fill="#001b0c" stroke="#001b0c" stroke-width="0.6"/>
<polygon points="313.7,495.7 320.7,506.5 333.8,517.1 326.9,506.3" fill="#000631" stroke="#000631" stroke-width="0.6"/>
<polygon points="576.0,389.7 580.1,401.8 580.7,384.8 576.6,372.6" fill="#00351e" stroke="#00351e" stroke-width="0.6"/>
<polygon points="289.5,460.9 296.6,472.1 306.6,484.7 299.5,473.5" fill="#001700" stroke="#001700" stroke-width="0.6"/>
<polygon points="333.8,517.1 340.6,527.8 356.6,536.1 349.9,525.3" fill="#314c00" stroke="#314c00" stroke-width="0.6"/>
<polygon points="568.3,347.6 572.5,360.2 569.5,344.3 565.4,331.7" fill="#00141b" stroke="#00141b" stroke-width="0.6"/>
<polygon points="575.8,419.6 580.0,431.6 584.2,413.8 580.1,401.8" fill="#345100" stroke="#345100" stroke-width="0.6"/>
<polygon points="306.6,484.7 313.7,495.7 326.9,506.3 319.9,495.2" fill="#00311b" stroke="#00311b" stroke-width="0.6"/>
<polygon points="571.8,377.3 576.0,389.7 576.6,372.6 572.5,360.2" fill="#003535" stroke="#003535" stroke-width="0.6"/>
<polygon points="282.2,449.6 289.5,460.9 299.5,473.5 292.2,462.2" fill="#081700" stroke="#081700" stroke-width="0.6"/>
<polygon points="326.9,506.3 333.8,517.1 349.9,525.3 343.1,514.5" fill="#00094c" stroke="#00094c" stroke-width="0.6"/>
<polygon points="564.0,334.9 568.3,347.6 565.4,331.7 561.1,318.9" fill="#191b00" stroke="#191b00" stroke-width="0.6"/>
<polygon points="571.6,407.5 575.8,419.6 580.1,401.8 576.0,389.7" fill="#000a51" stroke="#000a51" stroke-width="0.6"/>
<polygon points="349.9,525.3 356.6,536.1 375.1,541.7 368.6,530.9" fill="#006767" stroke="#006767" stroke-width="0.6"/>
<polygon points="299.5,473.5 306.6,484.7 319.9,495.2 312.8,484.1" fill="#1f3100" stroke="#1f3100" stroke-width="0.6"/>
<polygon points="567.9,437.7 572.2,449.5 580.0,431.6 575.8,419.6" fill="#456c00" stroke="#456c00" stroke-width="0.6"/>
<polygon points="567.5,364.8 571.8,377.3 572.5,360.2 568.3,347.6" fill="#000635" stroke="#000635" stroke-width="0.6"/>
<polygon points="274.8,438.2 282.2,449.6 292.2,462.2 284.9,450.8" fill="#170600" stroke="#170600" stroke-width="0.6"/>
<polygon points="319.9,495.2 326.9,506.3 343.1,514.5 336.2,503.4" fill="#004c4c" stroke="#004c4c" stroke-width="0.6"/>
<polygon points="559.7,322.0 564.0,334.9 561.1,318.9 556.8,306.0" fill="#000d1b" stroke="#000d1b" stroke-width="0.6"/>
<polygon points="567.3,395.3 571.6,407.5 576.0,389.7 571.8,377.3" fill="#005100" stroke="#005100" stroke-width="0.6"/>
<polygon points="343.1,514.5 349.9,525.3 368.6,530.9 362.0,520.0" fill="#006767" stroke="#006767" stroke-width="0.6"/>
<polygon points="292.2,462.2 299.5,473.5 312.8,484.1 305.6,472.8" fill="#003100" stroke="#003100" stroke-width="0.6"/>
<polygon points="563.5,425.7 567.9,437.7 575.8,419.6 571.6,407.5" fill="#000d6c" stroke="#000d6c" stroke-width="0.6"/>
<polygon points="368.6,530.9 375.1,541.7 395.8,544.4 389.4,533.6" fill="#528100" stroke="#528100" stroke-width="0.6"/>
<polygon points="563.2,352.1 567.5,364.8 568.3,347.6 564.0,334.9" fill="#223500" stroke="#223500" stroke-width="0.6"/>
<polygon points="267.3,426.5 274.8,438.2 284.9,450.8 277.4,439.1" fill="#170700" stroke="#170700" stroke-width="0.6"/>
<polygon points="556.4,455.5 560.8,467.3 572.2,449.5 567.9,437.7" fill="#008585" stroke="#008585" stroke-width="0.6"/>
<polygon points="312.8,484.1 319.9,495.2 336.2,503.4 329.2,492.2" fill="#4c0600" stroke="#4c0600" stroke-width="0.6"/>
<polygon points="555.3,308.9 559.7,322.0 556.8,306.0 552.4,292.9" fill="#1b1100" stroke="#1b1100" stroke-width="0.6"/>
<polygon points="562.9,382.8 567.3,395.3 571.8,377.3 567.5,364.8" fill="#345100" stroke="#345100" stroke-width="0.6"/>
<polygon points="336.2,503.4 343.1,514.5 362.0,520.0 355.2,508.9" fill="#006767" stroke="#006767" stroke-width="0.6"/>
<polygon points="284.9,450.8 292.2,462.2 305.6,472.8 298.3,461.3" fill="#310400" stroke="#310400" stroke-width="0.6"/>
<polygon points="559.1,413.5 563.5,425.7 571.6,407.5 567.3,395.3" fill="#000d6c" stroke="#000d6c" stroke-width="0.6"/>
<polygon points="362.0,520.0 368.6,530.9 389.4,533.6 382.9,522.7" fill="#000f81" stroke="#000f81" stroke-width="0.6"/>
<polygon points="389.4,533.6 395.8,544.4 417.9,544.2 411.8,533.3" fill="#309700" stroke="#309700" stroke-width="0.6"/>
<polygon points="558.8,339.3 563.2,352.1 564.0,334.9 559.7,322.0" fill="#000635" stroke="#000635" stroke-width="0.6"/>
<polygon points="259.7,414.8 267.3,426.5 277.4,439.1 269.8,427.4" fill="#170d00" stroke="#170d00" stroke-width="0.6"/>
<polygon points="541.6,472.6 546.2,484.2 560.8,467.3 556.4,455.5" fill="#9a6300" stroke="#9a6300" stroke-width="0.6"/>
<polygon points="551.8,443.7 556.4,455.5 567.9,437.7 563.5,425.7" fill="#558500" stroke="#558500" stroke-width="0.6"/>
<polygon points="305.6,472.8 312.8,484.1 329.2,492.2 322.2,480.9" fill="#002b4c" stroke="#002b4c" stroke-width="0.6"/>
<polygon points="550.8,295.6 555.3,308.9 552.4,292.9 548.0,279.6" fill="#001b16" stroke="#001b16" stroke-width="0.6"/>
<polygon points="558.5,370.2 562.9,382.8 567.5,364.8 563.2,352.1" fill="#00512d" stroke="#00512d" stroke-width="0.6"/>
<polygon points="277.4,439.1 284.9,450.8 298.3,461.3 290.9,449.7" fill="#313100" stroke="#313100" stroke-width="0.6"/>
<polygon points="329.2,492.2 336.2,503.4 355.2,508.9 348.4,497.7" fill="#426700" stroke="#426700" stroke-width="0.6"/>
<polygon points="411.8,533.3 417.9,544.2 441.0,540.9 435.1,529.9" fill="#a90d00" stroke="#a90d00" stroke-width="0.6"/>
<polygon points="523.9,488.4 528.8,499.9 546.2,484.2 541.6,472.6" fill="#00ab60" stroke="#00ab60" stroke-width="0.6"/>
<polygon points="554.6,401.2 559.1,413.5 567.3,395.3 562.9,382.8" fill="#006c6c" stroke="#006c6c" stroke-width="0.6"/>
<polygon points="355.2,508.9 362.0,520.0 382.9,522.7 376.4,511.5" fill="#810a00" stroke="#810a00" stroke-width="0.6"/>
<polygon points="382.9,522.7 389.4,533.6 411.8,533.3 405.5,522.3" fill="#009700" stroke="#009700" stroke-width="0.6"/>
<polygon points="554.3,326.2 558.8,339.3 559.7,322.0 555.3,308.9" fill="#350400" stroke="#350400" stroke-width="0.6"/>
<polygon points="252.0,402.8 259.7,414.8 269.8,427.4 262.1,415.4" fill="#170900" stroke="#170900" stroke-width="0.6"/>
<polygon points="536.8,460.9 541.6,472.6 556.4,455.5 551.8,443.7" fill="#009a56" stroke="#009a56" stroke-width="0.6"/>
<polygon points="547.2,431.6 551.8,443.7 563.5,425.7 559.1,413.5" fill="#001085" stroke="#001085" stroke-width="0.6"/>
<polygon points="546.3,282.1 550.8,295.6 548.0,279.6 543.5,266.1" fill="#001b0b" stroke="#001b0b" stroke-width="0.6"/>
<polygon points="298.3,461.3 305.6,472.8 322.2,480.9 315.0,469.4" fill="#004c00" stroke="#004c00" stroke-width="0.6"/>
<polygon points="435.1,529.9 441.0,540.9 464.3,534.6 458.7,523.5" fill="#b54800" stroke="#b54800" stroke-width="0.6"/>
<polygon points="503.7,502.5 508.9,513.8 528.8,499.9 523.9,488.4" fill="#0016b7" stroke="#0016b7" stroke-width="0.6"/>
<polygon points="554.0,357.4 558.5,370.2 563.2,352.1 558.8,339.3" fill="#005151" stroke="#005151" stroke-width="0.6"/>
<polygon points="458.7,523.5 464.3,534.6 487.2,525.5 481.8,514.3" fill="#00bc00" stroke="#00bc00" stroke-width="0.6"/>
<polygon points="481.8,514.3 487.2,525.5 508.9,513.8 503.7,502.5" fill="#00bc00" stroke="#00bc00" stroke-width="0.6"/>
<polygon points="269.8,427.4 277.4,439.1 290.9,449.7 283.4,437.9" fill="#310400" stroke="#310400" stroke-width="0.6"/>
<polygon points="322.2,480.9 329.2,492.2 348.4,497.7 341.4,486.3" fill="#670800" stroke="#670800" stroke-width="0.6"/>
<polygon points="405.5,522.3 411.8,533.3 435.1,529.9 429.1,518.8" fill="#a90d00" stroke="#a90d00" stroke-width="0.6"/>
<polygon points="518.9,476.8 523.9,488.4 541.6,472.6 536.8,460.9" fill="#0015ab" stroke="#0015ab" stroke-width="0.6"/>
<polygon points="550.0,388.7 554.6,401.2 562.9,382.8 558.5,370.2" fill="#6c4500" stroke="#6c4500" stroke-width="0.6"/>
<polygon points="348.4,497.7 355.2,508.9 376.4,511.5 369.8,500.2" fill="#528100" stroke="#528100" stroke-width="0.6"/>
<polygon points="549.8,313.0 554.3,326.2 555.3,308.9 550.8,295.6" fill="#003500" stroke="#003500" stroke-width="0.6"/>
<polygon points="376.4,511.5 382.9,522.7 405.5,522.3 399.2,511.1" fill="#976100" stroke="#976100" stroke-width="0.6"/>
<polygon points="244.2,390.7 252.0,402.8 262.1,415.4 254.4,403.3" fill="#061700" stroke="#061700" stroke-width="0.6"/>
<polygon points="532.0,448.9 536.8,460.9 551.8,443.7 547.2,431.6" fill="#639a00" stroke="#639a00" stroke-width="0.6"/>
<polygon points="542.5,419.4 547.2,431.6 559.1,413.5 554.6,401.2" fill="#008585" stroke="#008585" stroke-width="0.6"/>
<polygon points="541.7,268.5 546.3,282.1 543.5,266.1 538.9,252.4" fill="#1b0400" stroke="#1b0400" stroke-width="0.6"/>
<polygon points="290.9,449.7 298.3,461.3 315.0,469.4 307.7,457.7" fill="#4c1e00" stroke="#4c1e00" stroke-width="0.6"/>
<polygon points="429.1,518.8 435.1,529.9 458.7,523.5 452.9,512.3" fill="#00b5b5" stroke="#00b5b5" stroke-width="0.6"/>
<polygon points="498.5,491.0 503.7,502.5 523.9,488.4 518.9,476.8" fill="#75b700" stroke="#75b700" stroke-width="0.6"/>
<polygon points="549.5,344.4 554.0,357.4 558.8,339.3 554.3,326.2" fill="#00512d" stroke="#00512d" stroke-width="0.6"/>
<polygon points="452.9,512.3 458.7,523.5 481.8,514.3 476.3,502.9" fill="#0069bc" stroke="#0069bc" stroke-width="0.6"/>
<polygon points="476.3,502.9 481.8,514.3 503.7,502.5 498.5,491.0" fill="#0017bc" stroke="#0017bc" stroke-width="0.6"/>
<polygon points="262.1,415.4 269.8,427.4 283.4,437.9 275.8,425.9" fill="#003131" stroke="#003131" stroke-width="0.6"/>
<polygon points="315.0,469.4 322.2,480.9 341.4,486.3 334.4,474.8" fill="#006700" stroke="#006700" stroke-width="0.6"/>
<polygon points="399.2,511.1 405.5,522.3 429.1,518.8 423.0,507.5" fill="#00a95e" stroke="#00a95e" stroke-width="0.6"/>
<polygon points="513.8,465.0 518.9,476.8 536.8,460.9 532.0,448.9" fill="#abab00" stroke="#abab00" stroke-width="0.6"/>
<polygon points="545.4,376.0 550.0,388.7 558.5,370.2 554.0,357.4" fill="#226c00" stroke="#226c00" stroke-width="0.6"/>
<polygon points="341.4,486.3 348.4,497.7 369.8,500.2 363.0,488.8" fill="#008100" stroke="#008100" stroke-width="0.6"/>
<polygon points="545.2,299.6 549.8,313.0 550.8,295.6 546.3,282.1" fill="#223500" stroke="#223500" stroke-width="0.6"/>
<polygon points="236.3,378.4 244.2,390.7 254.4,403.3 246.5,391.0" fill="#00170c" stroke="#00170c" stroke-width="0.6"/>
<polygon points="369.8,500.2 376.4,511.5 399.2,511.1 392.8,499.7" fill="#309700" stroke="#309700" stroke-width="0.6"/>
<polygon points="527.1,436.8 532.0,448.9 547.2,431.6 542.5,419.4" fill="#00129a" stroke="#00129a" stroke-width="0.6"/>
<polygon points="537.8,407.0 542.5,419.4 554.6,401.2 550.0,388.7" fill="#008585" stroke="#008585" stroke-width="0.6"/>
<polygon points="537.1,254.6 541.7,268.5 538.9,252.4 534.3,238.6" fill="#00101b" stroke="#00101b" stroke-width="0.6"/>
<polygon points="283.4,437.9 290.9,449.7 307.7,457.7 300.3,445.9" fill="#004c00" stroke="#004c00" stroke-width="0.6"/>
<polygon points="423.0,507.5 429.1,518.8 452.9,512.3 447.1,500.9" fill="#b54800" stroke="#b54800" stroke-width="0.6"/>
<polygon points="493.2,479.3 498.5,491.0 518.9,476.8 513.8,465.0" fill="#0092b7" stroke="#0092b7" stroke-width="0.6"/>
<polygon points="544.8,331.3 549.5,344.4 554.3,326.2 549.8,313.0" fill="#005100" stroke="#005100" stroke-width="0.6"/>
<polygon points="447.1,500.9 452.9,512.3 476.3,502.9 470.8,491.4" fill="#00bc69" stroke="#00bc69" stroke-width="0.6"/>
<polygon points="470.8,491.4 476.3,502.9 498.5,491.0 493.2,479.3" fill="#bcbc00" stroke="#bcbc00" stroke-width="0.6"/>
<polygon points="254.4,403.3 262.1,415.4 275.8,425.9 268.1,413.7" fill="#003131" stroke="#003131" stroke-width="0.6"/>
<polygon points="307.7,457.7 315.0,469.4 334.4,474.8 327.3,463.0" fill="#674200" stroke="#674200" stroke-width="0.6"/>
<polygon points="392.8,499.7 399.2,511.1 423.0,507.5 416.8,496.0" fill="#0087a9" stroke="#0087a9" stroke-width="0.6"/>
<polygon points="508.7,453.0 513.8,465.0 532.0,448.9 527.1,436.8" fill="#ab4400" stroke="#ab4400" stroke-width="0.6"/>
<polygon points="540.7,363.1 545.4,376.0 554.0,357.4 549.5,344.4" fill="#6c4500" stroke="#6c4500" stroke-width="0.6"/>
<polygon points="228.3,366.0 236.3,378.4 246.5,391.0 238.5,378.5" fill="#0e1700" stroke="#0e1700" stroke-width="0.6"/>
<polygon points="540.6,285.9 545.2,299.6 546.3,282.1 541.7,268.5" fill="#003528" stroke="#003528" stroke-width="0.6"/>
<polygon points="334.4,474.8 341.4,486.3 363.0,488.8 356.2,477.2" fill="#000f81" stroke="#000f81" stroke-width="0.6"/>
<polygon points="363.0,488.8 369.8,500.2 392.8,499.7 386.3,488.1" fill="#009755" stroke="#009755" stroke-width="0.6"/>
<polygon points="522.2,424.5 527.1,436.8 542.5,419.4 537.8,407.0" fill="#009a56" stroke="#009a56" stroke-width="0.6"/>
<polygon points="533.0,394.4 537.8,407.0 550.0,388.7 545.4,376.0" fill="#850b00" stroke="#850b00" stroke-width="0.6"/>
<polygon points="532.4,240.6 537.1,254.6 534.3,238.6 529.6,224.5" fill="#031b00" stroke="#031b00" stroke-width="0.6"/>
<polygon points="275.8,425.9 283.4,437.9 300.3,445.9 292.8,433.9" fill="#184c00" stroke="#184c00" stroke-width="0.6"/>
<polygon points="416.8,496.0 423.0,507.5 447.1,500.9 441.2,489.3" fill="#b57400" stroke="#b57400" stroke-width="0.6"/>
<polygon points="487.9,467.5 493.2,479.3 513.8,465.0 508.7,453.0" fill="#00b700" stroke="#00b700" stroke-width="0.6"/>
<polygon points="540.1,317.9 544.8,331.3 549.8,313.0 545.2,299.6" fill="#005151" stroke="#005151" stroke-width="0.6"/>
<polygon points="441.2,489.3 447.1,500.9 470.8,491.4 465.1,479.7" fill="#00bc00" stroke="#00bc00" stroke-width="0.6"/>
<polygon points="246.5,391.0 254.4,403.3 268.1,413.7 260.3,401.4" fill="#1f3100" stroke="#1f3100" stroke-width="0.6"/>
<polygon points="465.1,479.7 470.8,491.4 493.2,479.3 487.9,467.5" fill="#00bcbc" stroke="#00bcbc" stroke-width="0.6"/>
<polygon points="300.3,445.9 307.7,457.7 327.3,463.0 320.0,451.1" fill="#674200" stroke="#674200" stroke-width="0.6"/>
<polygon points="386.3,488.1 392.8,499.7 416.8,496.0 410.6,484.4" fill="#a9a900" stroke="#a9a900" stroke-width="0.6"/>
<polygon points="503.5,440.9 508.7,453.0 527.1,436.8 522.2,424.5" fill="#0089ab" stroke="#0089ab" stroke-width="0.6"/>
<polygon points="220.1,353.3 228.3,366.0 238.5,378.5 230.3,365.9" fill="#000817" stroke="#000817" stroke-width="0.6"/>
<polygon points="535.9,272.1 540.6,285.9 541.7,268.5 537.1,254.6" fill="#000635" stroke="#000635" stroke-width="0.6"/>
<polygon points="535.9,350.0 540.7,363.1 549.5,344.4 544.8,331.3" fill="#6c2b00" stroke="#6c2b00" stroke-width="0.6"/>
<polygon points="327.3,463.0 334.4,474.8 356.2,477.2 349.2,465.4" fill="#815200" stroke="#815200" stroke-width="0.6"/>
<polygon points="356.2,477.2 363.0,488.8 386.3,488.1 379.7,476.4" fill="#001297" stroke="#001297" stroke-width="0.6"/>
<polygon points="528.1,381.6 533.0,394.4 545.4,376.0 540.7,363.1" fill="#001085" stroke="#001085" stroke-width="0.6"/>
<polygon points="517.2,412.1 522.2,424.5 537.8,407.0 533.0,394.4" fill="#009a56" stroke="#009a56" stroke-width="0.6"/>
<polygon points="527.6,226.3 532.4,240.6 529.6,224.5 524.9,210.2" fill="#1b1900" stroke="#1b1900" stroke-width="0.6"/>
<polygon points="268.1,413.7 275.8,425.9 292.8,433.9 285.2,421.7" fill="#004c00" stroke="#004c00" stroke-width="0.6"/>
<polygon points="410.6,484.4 416.8,496.0 441.2,489.3 435.2,477.5" fill="#b5b500" stroke="#b5b500" stroke-width="0.6"/>
<polygon points="482.4,455.4 487.9,467.5 508.7,453.0 503.5,440.9" fill="#b77500" stroke="#b77500" stroke-width="0.6"/>
<polygon points="535.4,304.4 540.1,317.9 545.2,299.6 540.6,285.9" fill="#005100" stroke="#005100" stroke-width="0.6"/>
<polygon points="238.5,378.5 246.5,391.0 260.3,401.4 252.3,388.9" fill="#000631" stroke="#000631" stroke-width="0.6"/>
<polygon points="435.2,477.5 441.2,489.3 465.1,479.7 459.4,467.8" fill="#78bc00" stroke="#78bc00" stroke-width="0.6"/>
<polygon points="459.4,467.8 465.1,479.7 487.9,467.5 482.4,455.4" fill="#0069bc" stroke="#0069bc" stroke-width="0.6"/>
<polygon points="292.8,433.9 300.3,445.9 320.0,451.1 312.7,439.1" fill="#006700" stroke="#006700" stroke-width="0.6"/>
<polygon points="379.7,476.4 386.3,488.1 410.6,484.4 404.2,472.6" fill="#a9a900" stroke="#a9a900" stroke-width="0.6"/>
<polygon points="211.9,340.5 220.1,353.3 230.3,365.9 222.1,353.0" fill="#00170e" stroke="#00170e" stroke-width="0.6"/>
<polygon points="531.1,258.1 535.9,272.1 537.1,254.6 532.4,240.6" fill="#003535" stroke="#003535" stroke-width="0.6"/>
<polygon points="498.3,428.5 503.5,440.9 522.2,424.5 517.2,412.1" fill="#00ab60" stroke="#00ab60" stroke-width="0.6"/>
<polygon points="531.1,336.7 535.9,350.0 544.8,331.3 540.1,317.9" fill="#226c00" stroke="#226c00" stroke-width="0.6"/>
<polygon points="320.0,451.1 327.3,463.0 349.2,465.4 342.2,453.4" fill="#810a00" stroke="#810a00" stroke-width="0.6"/>
<polygon points="349.2,465.4 356.2,477.2 379.7,476.4 372.9,464.5" fill="#976100" stroke="#976100" stroke-width="0.6"/>
<polygon points="523.2,368.6 528.1,381.6 540.7,363.1 535.9,350.0" fill="#00854a" stroke="#00854a" stroke-width="0.6"/>
<polygon points="512.1,399.4 517.2,412.1 533.0,394.4 528.1,381.6" fill="#00569a" stroke="#00569a" stroke-width="0.6"/>
<polygon points="522.7,211.8 527.6,226.3 524.9,210.2 520.1,195.8" fill="#001b16" stroke="#001b16" stroke-width="0.6"/>
<polygon points="260.3,401.4 268.1,413.7 285.2,421.7 277.4,409.3" fill="#4c2100" stroke="#4c2100" stroke-width="0.6"/>
<polygon points="404.2,472.6 410.6,484.4 435.2,477.5 429.1,465.6" fill="#74b500" stroke="#74b500" stroke-width="0.6"/>
<polygon points="476.9,443.2 482.4,455.4 503.5,440.9 498.3,428.5" fill="#75b700" stroke="#75b700" stroke-width="0.6"/>
<polygon points="530.6,290.6 535.4,304.4 540.6,285.9 535.9,272.1" fill="#510600" stroke="#510600" stroke-width="0.6"/>
<polygon points="230.3,365.9 238.5,378.5 252.3,388.9 244.2,376.2" fill="#003100" stroke="#003100" stroke-width="0.6"/>
<polygon points="429.1,465.6 435.2,477.5 459.4,467.8 453.6,455.7" fill="#00bcbc" stroke="#00bcbc" stroke-width="0.6"/>
<polygon points="453.6,455.7 459.4,467.8 482.4,455.4 476.9,443.2" fill="#00bc00" stroke="#00bc00" stroke-width="0.6"/>
<polygon points="285.2,421.7 292.8,433.9 312.7,439.1 305.2,426.8" fill="#670800" stroke="#670800" stroke-width="0.6"/>
<polygon points="372.9,464.5 379.7,476.4 404.2,472.6 397.8,460.6" fill="#005ea9" stroke="#005ea9" stroke-width="0.6"/>
<polygon points="203.5,327.5 211.9,340.5 222.1,353.0 213.7,340.0" fill="#000f17" stroke="#000f17" stroke-width="0.6"/>
<polygon points="526.2,243.9 531.1,258.1 532.4,240.6 527.6,226.3" fill="#223500" stroke="#223500" stroke-width="0.6"/>
<polygon points="526.1,323.2 531.1,336.7 540.1,317.9 535.4,304.4" fill="#6c2b00" stroke="#6c2b00" stroke-width="0.6"/>
<polygon points="492.9,416.0 498.3,428.5 517.2,412.1 512.1,399.4" fill="#0089ab" stroke="#0089ab" stroke-width="0.6"/>
<polygon points="312.7,439.1 320.0,451.1 342.2,453.4 335.0,441.2" fill="#008100" stroke="#008100" stroke-width="0.6"/>
<polygon points="342.2,453.4 349.2,465.4 372.9,464.5 366.1,452.5" fill="#970c00" stroke="#970c00" stroke-width="0.6"/>
<polygon points="518.1,355.4 523.2,368.6 535.9,350.0 531.1,336.7" fill="#004a85" stroke="#004a85" stroke-width="0.6"/>
<polygon points="517.8,197.2 522.7,211.8 520.1,195.8 515.2,181.1" fill="#1b1700" stroke="#1b1700" stroke-width="0.6"/>
<polygon points="506.9,386.6 512.1,399.4 528.1,381.6 523.2,368.6" fill="#00129a" stroke="#00129a" stroke-width="0.6"/>
<polygon points="252.3,388.9 260.3,401.4 277.4,409.3 269.6,396.7" fill="#004c4c" stroke="#004c4c" stroke-width="0.6"/>
<polygon points="397.8,460.6 404.2,472.6 429.1,465.6 422.9,453.5" fill="#b5b500" stroke="#b5b500" stroke-width="0.6"/>
<polygon points="471.2,430.8 476.9,443.2 498.3,428.5 492.9,416.0" fill="#0016b7" stroke="#0016b7" stroke-width="0.6"/>
<polygon points="525.7,276.6 530.6,290.6 535.9,272.1 531.1,258.1" fill="#005151" stroke="#005151" stroke-width="0.6"/>
<polygon points="222.1,353.0 230.3,365.9 244.2,376.2 236.1,363.3" fill="#003131" stroke="#003131" stroke-width="0.6"/>
<polygon points="422.9,453.5 429.1,465.6 453.6,455.7 447.7,443.5" fill="#00bcbc" stroke="#00bcbc" stroke-width="0.6"/>
<polygon points="277.4,409.3 285.2,421.7 305.2,426.8 297.7,414.4" fill="#000c67" stroke="#000c67" stroke-width="0.6"/>
<polygon points="447.7,443.5 453.6,455.7 476.9,443.2 471.2,430.8" fill="#79bc00" stroke="#79bc00" stroke-width="0.6"/>
<polygon points="366.1,452.5 372.9,464.5 397.8,460.6 391.2,448.4" fill="#a90d00" stroke="#a90d00" stroke-width="0.6"/>
<polygon points="195.0,314.3 203.5,327.5 213.7,340.0 205.2,326.8" fill="#001517" stroke="#001517" stroke-width="0.6"/>
<polygon points="521.3,229.4 526.2,243.9 527.6,226.3 522.7,211.8" fill="#350400" stroke="#350400" stroke-width="0.6"/>
<polygon points="521.2,309.6 526.1,323.2 535.4,304.4 530.6,290.6" fill="#456c00" stroke="#456c00" stroke-width="0.6"/>
<polygon points="487.5,403.3 492.9,416.0 512.1,399.4 506.9,386.6" fill="#00ab60" stroke="#00ab60" stroke-width="0.6"/>
<polygon points="305.2,426.8 312.7,439.1 335.0,441.2 327.8,428.9" fill="#810a00" stroke="#810a00" stroke-width="0.6"/>
<polygon points="335.0,441.2 342.2,453.4 366.1,452.5 359.2,440.2" fill="#009797" stroke="#009797" stroke-width="0.6"/>
<polygon points="512.8,182.3 517.8,197.2 515.2,181.1 510.2,166.2" fill="#00031b" stroke="#00031b" stroke-width="0.6"/>
<polygon points="513.0,342.1 518.1,355.4 531.1,336.7 526.1,323.2" fill="#008500" stroke="#008500" stroke-width="0.6"/>
<polygon points="501.6,373.5 506.9,386.6 523.2,368.6 518.1,355.4" fill="#009a56" stroke="#009a56" stroke-width="0.6"/>
<polygon points="244.2,376.2 252.3,388.9 269.6,396.7 261.6,384.0" fill="#4c0600" stroke="#4c0600" stroke-width="0.6"/>
<polygon points="391.2,448.4 397.8,460.6 422.9,453.5 416.6,441.2" fill="#3ab500" stroke="#3ab500" stroke-width="0.6"/>
<polygon points="465.5,418.3 471.2,430.8 492.9,416.0 487.5,403.3" fill="#0066b7" stroke="#0066b7" stroke-width="0.6"/>
<polygon points="520.7,262.4 525.7,276.6 531.1,258.1 526.2,243.9" fill="#512000" stroke="#512000" stroke-width="0.6"/>
<polygon points="213.7,340.0 222.1,353.0 236.1,363.3 227.7,350.2" fill="#000631" stroke="#000631" stroke-width="0.6"/>
<polygon points="416.6,441.2 422.9,453.5 447.7,443.5 441.7,431.0" fill="#00bc69" stroke="#00bc69" stroke-width="0.6"/>
<polygon points="269.6,396.7 277.4,409.3 297.7,414.4 290.0,401.7" fill="#000c67" stroke="#000c67" stroke-width="0.6"/>
<polygon points="441.7,431.0 447.7,443.5 471.2,430.8 465.5,418.3" fill="#0097bc" stroke="#0097bc" stroke-width="0.6"/>
<polygon points="186.4,301.0 195.0,314.3 205.2,326.8 196.6,313.4" fill="#170500" stroke="#170500" stroke-width="0.6"/>
<polygon points="359.2,440.2 366.1,452.5 391.2,448.4 384.5,436.0" fill="#00a9a9" stroke="#00a9a9" stroke-width="0.6"/>
<polygon points="516.3,214.7 521.3,229.4 522.7,211.8 517.8,197.2" fill="#353500" stroke="#353500" stroke-width="0.6"/>
<polygon points="516.1,295.7 521.2,309.6 530.6,290.6 525.7,276.6" fill="#226c00" stroke="#226c00" stroke-width="0.6"/>
<polygon points="482.0,390.4 487.5,403.3 506.9,386.6 501.6,373.5" fill="#00abab" stroke="#00abab" stroke-width="0.6"/>
<polygon points="297.7,414.4 305.2,426.8 327.8,428.9 320.4,416.4" fill="#810a00" stroke="#810a00" stroke-width="0.6"/>
<polygon points="327.8,428.9 335.0,441.2 359.2,440.2 352.2,427.8" fill="#970c00" stroke="#970c00" stroke-width="0.6"/>
<polygon points="507.7,167.1 512.8,182.3 510.2,166.2 505.2,151.1" fill="#00031b" stroke="#00031b" stroke-width="0.6"/>
<polygon points="507.8,328.5 513.0,342.1 526.1,323.2 521.2,309.6" fill="#858500" stroke="#858500" stroke-width="0.6"/>
<polygon points="496.3,360.3 501.6,373.5 518.1,355.4 513.0,342.1" fill="#009a00" stroke="#009a00" stroke-width="0.6"/>
<polygon points="236.1,363.3 244.2,376.2 261.6,384.0 253.6,371.0" fill="#314c00" stroke="#314c00" stroke-width="0.6"/>
<polygon points="384.5,436.0 391.2,448.4 416.6,441.2 410.3,428.7" fill="#00b500" stroke="#00b500" stroke-width="0.6"/>
<polygon points="459.7,405.5 465.5,418.3 487.5,403.3 482.0,390.4" fill="#b74900" stroke="#b74900" stroke-width="0.6"/>
<polygon points="515.6,248.0 520.7,262.4 526.2,243.9 521.3,229.4" fill="#00512d" stroke="#00512d" stroke-width="0.6"/>
<polygon points="205.2,326.8 213.7,340.0 227.7,350.2 219.3,337.0" fill="#310400" stroke="#310400" stroke-width="0.6"/>
<polygon points="261.6,384.0 269.6,396.7 290.0,401.7 282.2,388.9" fill="#006767" stroke="#006767" stroke-width="0.6"/>
<polygon points="410.3,428.7 416.6,441.2 441.7,431.0 435.6,418.4" fill="#00bc00" stroke="#00bc00" stroke-width="0.6"/>
<polygon points="435.6,418.4 441.7,431.0 465.5,418.3 459.7,405.5" fill="#00bc00" stroke="#00bc00" stroke-width="0.6"/>
<polygon points="177.6,287.4 186.4,301.0 196.6,313.4 187.8,299.7" fill="#171500" stroke="#171500" stroke-width="0.6"/>
<polygon points="352.2,427.8 359.2,440.2 384.5,436.0 377.8,423.5" fill="#00a900" stroke="#00a900" stroke-width="0.6"/>
<polygon points="511.2,199.9 516.3,214.7 517.8,197.2 512.8,182.3" fill="#003535" stroke="#003535" stroke-width="0.6"/>
<polygon points="511.0,281.6 516.1,295.7 525.7,276.6 520.7,262.4" fill="#006c00" stroke="#006c00" stroke-width="0.6"/>
<polygon points="476.4,377.3 482.0,390.4 501.6,373.5 496.3,360.3" fill="#0060ab" stroke="#0060ab" stroke-width="0.6"/>
<polygon points="290.0,401.7 297.7,414.4 320.4,416.4 312.9,403.6" fill="#000f81" stroke="#000f81" stroke-width="0.6"/>
<polygon points="320.4,416.4 327.8,428.9 352.2,427.8 345.0,415.1" fill="#009755" stroke="#009755" stroke-width="0.6"/>
<polygon points="502.6,151.8 507.7,167.1 505.2,151.1 500.1,135.8" fill="#00031b" stroke="#00031b" stroke-width="0.6"/>
<polygon points="502.6,314.7 507.8,328.5 521.2,309.6 516.1,295.7" fill="#853500" stroke="#853500" stroke-width="0.6"/>
<polygon points="490.9,346.8 496.3,360.3 513.0,342.1 507.8,328.5" fill="#9a9a00" stroke="#9a9a00" stroke-width="0.6"/>
<polygon points="227.7,350.2 236.1,363.3 253.6,371.0 245.4,357.9" fill="#4c0600" stroke="#4c0600" stroke-width="0.6"/>
<polygon points="377.8,423.5 384.5,436.0 410.3,428.7 403.8,416.0" fill="#b50e00" stroke="#b50e00" stroke-width="0.6"/>
<polygon points="510.5,233.4 515.6,248.0 521.3,229.4 516.3,214.7" fill="#005151" stroke="#005151" stroke-width="0.6"/>
<polygon points="453.9,392.5 459.7,405.5 482.0,390.4 476.4,377.3" fill="#b70f00" stroke="#b70f00" stroke-width="0.6"/>
<polygon points="196.6,313.4 205.2,326.8 219.3,337.0 210.7,323.5" fill="#103100" stroke="#103100" stroke-width="0.6"/>
<polygon points="253.6,371.0 261.6,384.0 282.2,388.9 274.2,375.9" fill="#426700" stroke="#426700" stroke-width="0.6"/>
<polygon points="403.8,416.0 410.3,428.7 435.6,418.4 429.4,405.6" fill="#00bc00" stroke="#00bc00" stroke-width="0.6"/>
<polygon points="429.4,405.6 435.6,418.4 459.7,405.5 453.9,392.5" fill="#00bc00" stroke="#00bc00" stroke-width="0.6"/>
<polygon points="168.8,273.6 177.6,287.4 187.8,299.7 179.0,285.9" fill="#000317" stroke="#000317" stroke-width="0.6"/>
<polygon points="506.1,184.7 511.2,199.9 512.8,182.3 507.7,167.1" fill="#000635" stroke="#000635" stroke-width="0.6"/>
<polygon points="345.0,415.1 352.2,427.8 377.8,423.5 370.9,410.7" fill="#00a900" stroke="#00a900" stroke-width="0.6"/>
<polygon points="505.7,267.2 511.0,281.6 520.7,262.4 515.6,248.0" fill="#000d6c" stroke="#000d6c" stroke-width="0.6"/>
<polygon points="470.7,363.9 476.4,377.3 496.3,360.3 490.9,346.8" fill="#00ab60" stroke="#00ab60" stroke-width="0.6"/>
<polygon points="282.2,388.9 290.0,401.7 312.9,403.6 305.3,390.7" fill="#818100" stroke="#818100" stroke-width="0.6"/>
<polygon points="312.9,403.6 320.4,416.4 345.0,415.1 337.8,402.3" fill="#973c00" stroke="#973c00" stroke-width="0.6"/>
<polygon points="497.4,136.2 502.6,151.8 500.1,135.8 494.9,120.2" fill="#00031b" stroke="#00031b" stroke-width="0.6"/>
<polygon points="497.2,300.7 502.6,314.7 516.1,295.7 511.0,281.6" fill="#008500" stroke="#008500" stroke-width="0.6"/>
<polygon points="485.3,333.1 490.9,346.8 507.8,328.5 502.6,314.7" fill="#9a3e00" stroke="#9a3e00" stroke-width="0.6"/>
<polygon points="219.3,337.0 227.7,350.2 245.4,357.9 237.0,344.6" fill="#00094c" stroke="#00094c" stroke-width="0.6"/>
<polygon points="370.9,410.7 377.8,423.5 403.8,416.0 397.2,403.1" fill="#0016b5" stroke="#0016b5" stroke-width="0.6"/>
<polygon points="505.3,218.6 510.5,233.4 516.3,214.7 511.2,199.9" fill="#00512d" stroke="#00512d" stroke-width="0.6"/>
<polygon points="447.9,379.3 453.9,392.5 476.4,377.3 470.7,363.9" fill="#00b7b7" stroke="#00b7b7" stroke-width="0.6"/>
<polygon points="187.8,299.7 196.6,313.4 210.7,323.5 202.0,309.8" fill="#311300" stroke="#311300" stroke-width="0.6"/>
<polygon points="245.4,357.9 253.6,371.0 274.2,375.9 266.2,362.6" fill="#672900" stroke="#672900" stroke-width="0.6"/>
<polygon points="397.2,403.1 403.8,416.0 429.4,405.6 423.1,392.5" fill="#78bc00" stroke="#78bc00" stroke-width="0.6"/>
<polygon points="423.1,392.5 429.4,405.6 453.9,392.5 447.9,379.3" fill="#bcbc00" stroke="#bcbc00" stroke-width="0.6"/>
<polygon points="158.8,258.2 168.8,273.6 179.0,285.9 169.0,270.4" fill="#001617" stroke="#001617" stroke-width="0.6"/>
<polygon points="500.8,169.4 506.1,184.7 507.7,167.1 502.6,151.8" fill="#000635" stroke="#000635" stroke-width="0.6"/>
<polygon points="337.8,402.3 345.0,415.1 370.9,410.7 363.9,397.7" fill="#a94300" stroke="#a94300" stroke-width="0.6"/>
<polygon points="500.4,252.7 505.7,267.2 515.6,248.0 510.5,233.4" fill="#6c4500" stroke="#6c4500" stroke-width="0.6"/>
<polygon points="274.2,375.9 282.2,388.9 305.3,390.7 297.6,377.6" fill="#818100" stroke="#818100" stroke-width="0.6"/>
<polygon points="464.9,350.4 470.7,363.9 490.9,346.8 485.3,333.1" fill="#00ab00" stroke="#00ab00" stroke-width="0.6"/>
<polygon points="305.3,390.7 312.9,403.6 337.8,402.3 330.4,389.3" fill="#979700" stroke="#979700" stroke-width="0.6"/>
<polygon points="491.5,118.8 497.4,136.2 494.9,120.2 489.1,102.8" fill="#00031b" stroke="#00031b" stroke-width="0.6"/>
<polygon points="491.8,286.5 497.2,300.7 511.0,281.6 505.7,267.2" fill="#001085" stroke="#001085" stroke-width="0.6"/>
<polygon points="210.7,323.5 219.3,337.0 237.0,344.6 228.6,331.0" fill="#004c00" stroke="#004c00" stroke-width="0.6"/>
<polygon points="479.8,319.3 485.3,333.1 502.6,314.7 497.2,300.7" fill="#007b9a" stroke="#007b9a" stroke-width="0.6"/>
<polygon points="363.9,397.7 370.9,410.7 397.2,403.1 390.5,390.0" fill="#74b500" stroke="#74b500" stroke-width="0.6"/>
<polygon points="500.0,203.5 505.3,218.6 511.2,199.9 506.1,184.7" fill="#005100" stroke="#005100" stroke-width="0.6"/>
<polygon points="441.8,366.0 447.9,379.3 470.7,363.9 464.9,350.4" fill="#b7b700" stroke="#b7b700" stroke-width="0.6"/>
<polygon points="179.0,285.9 187.8,299.7 202.0,309.8 193.2,295.9" fill="#003100" stroke="#003100" stroke-width="0.6"/>
<polygon points="237.0,344.6 245.4,357.9 266.2,362.6 258.0,349.2" fill="#670800" stroke="#670800" stroke-width="0.6"/>
<polygon points="390.5,390.0 397.2,403.1 423.1,392.5 416.8,379.3" fill="#bc0f00" stroke="#bc0f00" stroke-width="0.6"/>
<polygon points="416.8,379.3 423.1,392.5 447.9,379.3 441.8,366.0" fill="#0097bc" stroke="#0097bc" stroke-width="0.6"/>
<polygon points="495.5,153.8 500.8,169.4 502.6,151.8 497.4,136.2" fill="#003500" stroke="#003500" stroke-width="0.6"/>
<polygon points="330.4,389.3 337.8,402.3 363.9,397.7 356.8,384.6" fill="#a90d00" stroke="#a90d00" stroke-width="0.6"/>
<polygon points="495.0,237.9 500.4,252.7 510.5,233.4 505.3,218.6" fill="#000d6c" stroke="#000d6c" stroke-width="0.6"/>
<polygon points="266.2,362.6 274.2,375.9 297.6,377.6 289.7,364.3" fill="#813400" stroke="#813400" stroke-width="0.6"/>
<polygon points="459.0,336.7 464.9,350.4 485.3,333.1 479.8,319.3" fill="#00ab00" stroke="#00ab00" stroke-width="0.6"/>
<polygon points="297.6,377.6 305.3,390.7 330.4,389.3 323.0,376.0" fill="#007997" stroke="#007997" stroke-width="0.6"/>
<polygon points="486.3,272.0 491.8,286.5 505.7,267.2 500.4,252.7" fill="#2a8500" stroke="#2a8500" stroke-width="0.6"/>
<polygon points="202.0,309.8 210.7,323.5 228.6,331.0 220.0,317.2" fill="#004c00" stroke="#004c00" stroke-width="0.6"/>
<polygon points="474.1,305.2 479.8,319.3 497.2,300.7 491.8,286.5" fill="#009a00" stroke="#009a00" stroke-width="0.6"/>
<polygon points="494.6,188.2 500.0,203.5 506.1,184.7 500.8,169.4" fill="#345100" stroke="#345100" stroke-width="0.6"/>
<polygon points="356.8,384.6 363.9,397.7 390.5,390.0 383.7,376.7" fill="#0091b5" stroke="#0091b5" stroke-width="0.6"/>
<polygon points="435.6,352.4 441.8,366.0 464.9,350.4 459.0,336.7" fill="#0016b7" stroke="#0016b7" stroke-width="0.6"/>
<polygon points="169.0,270.4 179.0,285.9 193.2,295.9 183.3,280.4" fill="#003131" stroke="#003131" stroke-width="0.6"/>
<polygon points="228.6,331.0 237.0,344.6 258.0,349.2 249.7,335.6" fill="#670800" stroke="#670800" stroke-width="0.6"/>
<polygon points="383.7,376.7 390.5,390.0 416.8,379.3 410.3,365.8" fill="#0017bc" stroke="#0017bc" stroke-width="0.6"/>
<polygon points="410.3,365.8 416.8,379.3 441.8,366.0 435.6,352.4" fill="#3cbc00" stroke="#3cbc00" stroke-width="0.6"/>
<polygon points="489.6,136.4 495.5,153.8 497.4,136.2 491.5,118.8" fill="#352200" stroke="#352200" stroke-width="0.6"/>
<polygon points="323.0,376.0 330.4,389.3 356.8,384.6 349.6,371.2" fill="#00a900" stroke="#00a900" stroke-width="0.6"/>
<polygon points="489.6,222.9 495.0,237.9 505.3,218.6 500.0,203.5" fill="#226c00" stroke="#226c00" stroke-width="0.6"/>
<polygon points="258.0,349.2 266.2,362.6 289.7,364.3 281.8,350.7" fill="#810a00" stroke="#810a00" stroke-width="0.6"/>
<polygon points="453.1,322.7 459.0,336.7 479.8,319.3 474.1,305.2" fill="#0015ab" stroke="#0015ab" stroke-width="0.6"/>
<polygon points="289.7,364.3 297.6,377.6 323.0,376.0 315.4,362.6" fill="#009797" stroke="#009797" stroke-width="0.6"/>
<polygon points="193.2,295.9 202.0,309.8 220.0,317.2 211.2,303.2" fill="#314c00" stroke="#314c00" stroke-width="0.6"/>
<polygon points="480.7,257.4 486.3,272.0 500.4,252.7 495.0,237.9" fill="#558500" stroke="#558500" stroke-width="0.6"/>
<polygon points="468.3,290.8 474.1,305.2 491.8,286.5 486.3,272.0" fill="#009a56" stroke="#009a56" stroke-width="0.6"/>
<polygon points="489.2,172.6 494.6,188.2 500.8,169.4 495.5,153.8" fill="#000a51" stroke="#000a51" stroke-width="0.6"/>
<polygon points="349.6,371.2 356.8,384.6 383.7,376.7 376.8,363.2" fill="#00b500" stroke="#00b500" stroke-width="0.6"/>
<polygon points="429.4,338.5 435.6,352.4 459.0,336.7 453.1,322.7" fill="#b7b700" stroke="#b7b700" stroke-width="0.6"/>
<polygon points="220.0,317.2 228.6,331.0 249.7,335.6 241.3,321.7" fill="#670800" stroke="#670800" stroke-width="0.6"/>
<polygon points="376.8,363.2 383.7,376.7 410.3,365.8 403.7,352.2" fill="#bc4b00" stroke="#bc4b00" stroke-width="0.6"/>
<polygon points="403.7,352.2 410.3,365.8 435.6,352.4 429.4,338.5" fill="#bc7900" stroke="#bc7900" stroke-width="0.6"/>
<polygon points="315.4,362.6 323.0,376.0 349.6,371.2 342.3,357.6" fill="#00a9a9" stroke="#00a9a9" stroke-width="0.6"/>
<polygon points="484.0,207.7 489.6,222.9 500.0,203.5 494.6,188.2" fill="#456c00" stroke="#456c00" stroke-width="0.6"/>
<polygon points="249.7,335.6 258.0,349.2 281.8,350.7 273.7,336.9" fill="#810a00" stroke="#810a00" stroke-width="0.6"/>
<polygon points="447.0,308.5 453.1,322.7 474.1,305.2 468.3,290.8" fill="#00ab00" stroke="#00ab00" stroke-width="0.6"/>
<polygon points="281.8,350.7 289.7,364.3 315.4,362.6 307.6,348.9" fill="#009700" stroke="#009700" stroke-width="0.6"/>
<polygon points="475.0,242.4 480.7,257.4 495.0,237.9 489.6,222.9" fill="#008500" stroke="#008500" stroke-width="0.6"/>
<polygon points="183.3,280.4 193.2,295.9 211.2,303.2 201.5,287.6" fill="#004c2b" stroke="#004c2b" stroke-width="0.6"/>
<polygon points="462.4,276.3 468.3,290.8 486.3,272.0 480.7,257.4" fill="#639a00" stroke="#639a00" stroke-width="0.6"/>
<polygon points="483.1,155.2 489.2,172.6 495.5,153.8 489.6,136.4" fill="#00512d" stroke="#00512d" stroke-width="0.6"/>
<polygon points="342.3,357.6 349.6,371.2 376.8,363.2 369.8,349.4" fill="#0016b5" stroke="#0016b5" stroke-width="0.6"/>
<polygon points="423.0,324.5 429.4,338.5 453.1,322.7 447.0,308.5" fill="#00b7b7" stroke="#00b7b7" stroke-width="0.6"/>
<polygon points="211.2,303.2 220.0,317.2 241.3,321.7 232.7,307.6" fill="#000c67" stroke="#000c67" stroke-width="0.6"/>
<polygon points="369.8,349.4 376.8,363.2 403.7,352.2 397.0,338.3" fill="#bcbc00" stroke="#bcbc00" stroke-width="0.6"/>
<polygon points="397.0,338.3 403.7,352.2 429.4,338.5 423.0,324.5" fill="#00bc00" stroke="#00bc00" stroke-width="0.6"/>
<polygon points="478.4,192.2 484.0,207.7 494.6,188.2 489.2,172.6" fill="#6c6c00" stroke="#6c6c00" stroke-width="0.6"/>
<polygon points="307.6,348.9 315.4,362.6 342.3,357.6 334.9,343.8" fill="#0087a9" stroke="#0087a9" stroke-width="0.6"/>
<polygon points="241.3,321.7 249.7,335.6 273.7,336.9 265.4,323.0" fill="#810a00" stroke="#810a00" stroke-width="0.6"/>
<polygon points="440.8,294.1 447.0,308.5 468.3,290.8 462.4,276.3" fill="#00ab60" stroke="#00ab60" stroke-width="0.6"/>
<polygon points="273.7,336.9 281.8,350.7 307.6,348.9 299.8,335.0" fill="#009797" stroke="#009797" stroke-width="0.6"/>
<polygon points="469.2,227.3 475.0,242.4 489.6,222.9 484.0,207.7" fill="#006a85" stroke="#006a85" stroke-width="0.6"/>
<polygon points="456.5,261.5 462.4,276.3 480.7,257.4 475.0,242.4" fill="#00569a" stroke="#00569a" stroke-width="0.6"/>
<polygon points="334.9,343.8 342.3,357.6 369.8,349.4 362.7,335.5" fill="#0016b5" stroke="#0016b5" stroke-width="0.6"/>
<polygon points="416.5,310.2 423.0,324.5 447.0,308.5 440.8,294.1" fill="#b70f00" stroke="#b70f00" stroke-width="0.6"/>
<polygon points="201.5,287.6 211.2,303.2 232.7,307.6 223.1,291.8" fill="#006700" stroke="#006700" stroke-width="0.6"/>
<polygon points="362.7,335.5 369.8,349.4 397.0,338.3 390.2,324.2" fill="#0096bc" stroke="#0096bc" stroke-width="0.6"/>
<polygon points="390.2,324.2 397.0,338.3 423.0,324.5 416.5,310.2" fill="#3cbc00" stroke="#3cbc00" stroke-width="0.6"/>
<polygon points="299.8,335.0 307.6,348.9 334.9,343.8 327.3,329.8" fill="#6ca900" stroke="#6ca900" stroke-width="0.6"/>
<polygon points="472.1,174.8 478.4,192.2 489.2,172.6 483.1,155.2" fill="#000d6c" stroke="#000d6c" stroke-width="0.6"/>
<polygon points="232.7,307.6 241.3,321.7 265.4,323.0 257.1,308.8" fill="#000f81" stroke="#000f81" stroke-width="0.6"/>
<polygon points="434.6,279.4 440.8,294.1 462.4,276.3 456.5,261.5" fill="#ab0e00" stroke="#ab0e00" stroke-width="0.6"/>
<polygon points="265.4,323.0 273.7,336.9 299.8,335.0 291.8,320.9" fill="#005497" stroke="#005497" stroke-width="0.6"/>
<polygon points="463.3,211.9 469.2,227.3 484.0,207.7 478.4,192.2" fill="#855500" stroke="#855500" stroke-width="0.6"/>
<polygon points="450.4,246.4 456.5,261.5 475.0,242.4 469.2,227.3" fill="#9a9a00" stroke="#9a9a00" stroke-width="0.6"/>
<polygon points="327.3,329.8 334.9,343.8 362.7,335.5 355.5,321.3" fill="#3ab500" stroke="#3ab500" stroke-width="0.6"/>
<polygon points="409.9,295.7 416.5,310.2 440.8,294.1 434.6,279.4" fill="#00b700" stroke="#00b700" stroke-width="0.6"/>
<polygon points="355.5,321.3 362.7,335.5 390.2,324.2 383.3,309.8" fill="#0017bc" stroke="#0017bc" stroke-width="0.6"/>
<polygon points="383.3,309.8 390.2,324.2 416.5,310.2 409.9,295.7" fill="#bcbc00" stroke="#bcbc00" stroke-width="0.6"/>
<polygon points="291.8,320.9 299.8,335.0 327.3,329.8 319.7,315.5" fill="#00a9a9" stroke="#00a9a9" stroke-width="0.6"/>
<polygon points="223.1,291.8 232.7,307.6 257.1,308.8 247.7,292.8" fill="#004881" stroke="#004881" stroke-width="0.6"/>
<polygon points="428.2,264.5 434.6,279.4 456.5,261.5 450.4,246.4" fill="#00ab00" stroke="#00ab00" stroke-width="0.6"/>
<polygon points="257.1,308.8 265.4,323.0 291.8,320.9 283.7,306.6" fill="#005497" stroke="#005497" stroke-width="0.6"/>
<polygon points="456.7,194.6 463.3,211.9 478.4,192.2 472.1,174.8" fill="#008500" stroke="#008500" stroke-width="0.6"/>
<polygon points="444.2,231.2 450.4,246.4 469.2,227.3 463.3,211.9" fill="#319a00" stroke="#319a00" stroke-width="0.6"/>
<polygon points="319.7,315.5 327.3,329.8 355.5,321.3 348.1,306.9" fill="#00b566" stroke="#00b566" stroke-width="0.6"/>
<polygon points="403.3,281.0 409.9,295.7 434.6,279.4 428.2,264.5" fill="#00b700" stroke="#00b700" stroke-width="0.6"/>
<polygon points="348.1,306.9 355.5,321.3 383.3,309.8 376.3,295.2" fill="#00bc00" stroke="#00bc00" stroke-width="0.6"/>
<polygon points="376.3,295.2 383.3,309.8 409.9,295.7 403.3,281.0" fill="#00bc00" stroke="#00bc00" stroke-width="0.6"/>
<polygon points="283.7,306.6 291.8,320.9 319.7,315.5 311.8,301.0" fill="#36a900" stroke="#36a900" stroke-width="0.6"/>
<polygon points="421.7,249.4 428.2,264.5 450.4,246.4 444.2,231.2" fill="#0089ab" stroke="#0089ab" stroke-width="0.6"/>
<polygon points="247.7,292.8 257.1,308.8 283.7,306.6 274.6,290.5" fill="#005497" stroke="#005497" stroke-width="0.6"/>
<polygon points="437.3,214.0 444.2,231.2 463.3,211.9 456.7,194.6" fill="#009a00" stroke="#009a00" stroke-width="0.6"/>
<polygon points="311.8,301.0 319.7,315.5 348.1,306.9 340.6,292.2" fill="#3ab500" stroke="#3ab500" stroke-width="0.6"/>
<polygon points="396.4,266.0 403.3,281.0 428.2,264.5 421.7,249.4" fill="#0092b7" stroke="#0092b7" stroke-width="0.6"/>
<polygon points="340.6,292.2 348.1,306.9 376.3,295.2 369.1,280.4" fill="#bcbc00" stroke="#bcbc00" stroke-width="0.6"/>
<polygon points="369.1,280.4 376.3,295.2 403.3,281.0 396.4,266.0" fill="#00bcbc" stroke="#00bcbc" stroke-width="0.6"/>
<polygon points="274.6,290.5 283.7,306.6 311.8,301.0 303.1,284.8" fill="#005ea9" stroke="#005ea9" stroke-width="0.6"/>
<polygon points="414.5,232.4 421.7,249.4 444.2,231.2 437.3,214.0" fill="#0089ab" stroke="#0089ab" stroke-width="0.6"/>
<polygon points="303.1,284.8 311.8,301.0 340.6,292.2 332.2,275.8" fill="#00b500" stroke="#00b500" stroke-width="0.6"/>
<polygon points="388.8,249.2 396.4,266.0 421.7,249.4 414.5,232.4" fill="#b7b700" stroke="#b7b700" stroke-width="0.6"/>
<polygon points="332.2,275.8 340.6,292.2 369.1,280.4 361.1,263.8" fill="#00bcbc" stroke="#00bcbc" stroke-width="0.6"/>
<polygon points="361.1,263.8 369.1,280.4 396.4,266.0 388.8,249.2" fill="#00bcbc" stroke="#00bcbc" stroke-width="0.6"/>
<defs><linearGradient id="cbg" x1="0" y1="0" x2="0" y2="1"><stop offset="0.0400" stop-color="#ff0000"/><stop offset="0.0783" stop-color="#ff2b00"/><stop offset="0.1167" stop-color="#ff5500"/><stop offset="0.1550" stop-color="#ff8000"/><stop offset="0.1933" stop-color="#ffaa00"/><stop offset="0.2317" stop-color="#ffd500"/><stop offset="0.2700" stop-color="#ffff00"/><stop offset="0.3083" stop-color="#d4ff00"/><stop offset="0.3467" stop-color="#aaff00"/><stop offset="0.3850" stop-color="#7fff00"/><stop offset="0.4233" stop-color="#55ff00"/><stop offset="0.4617" stop-color="#2aff00"/><stop offset="0.5000" stop-color="#00ff00"/><stop offset="0.5383" stop-color="#00ff2b"/><stop offset="0.5767" stop-color="#00ff55"/><stop offset="0.6150" stop-color="#00ff80"/><stop offset="0.6533" stop-color="#00ffaa"/><stop offset="0.6917" stop-color="#00ffd5"/><stop offset="0.7300" stop-color="#00ffff"/><stop offset="0.7683" stop-color="#00d4ff"/><stop offset="0.8067" stop-color="#00aaff"/><stop offset="0.8450" stop-color="#007fff"/><stop offset="0.8833" stop-color="#0055ff"/><stop offset="0.9217" stop-color="#002aff"/><stop offset="0.9600" stop-color="#0000ff"/></linearGradient></defs>
<rect x="613.9000000000001" y="153.0" width="38.1" height="304.0" fill="url(#cbg)"/>
<text x="659.3" y="156" font-family="Liberation Sans" font-size="12" fill="#f4f4f4">9.99171</text>
<text x="659.3" y="231.89999999999998" font-family="Liberation Sans" font-size="12" fill="#f4f4f4">7.49604</text>
<text x="659.3" y="308.2" font-family="Liberation Sans" font-size="12" fill="#f4f4f4">5.00036</text>
<text x="659.3" y="384.2" font-family="Liberation Sans" font-size="12" fill="#f4f4f4">2.50469</text>
<text x="659.3" y="460" font-family="Liberation Sans" font-size="12" fill="#f4f4f4">0.00901816</text>
<text transform="translate(737.2,332.9) rotate(-90)" font-family="Liberation Sans" font-weight="bold" font-size="12.6" fill="#f4f4f4">aux_elem</text>
</svg></div>
<svg class="abs" style="left:425px;top:724px" width="190" height="48" viewBox="425 724 190 48"><defs><radialGradient id="mg" cx="0.5" cy="0.45" r="0.55"><stop offset="0" stop-color="#ffffff"/><stop offset="0.6" stop-color="#fafafa"/><stop offset="1" stop-color="#d4d4d4"/></radialGradient><radialGradient id="mgd" cx="0.5" cy="0.45" r="0.55"><stop offset="0" stop-color="#f6f6f6"/><stop offset="0.6" stop-color="#efefef"/><stop offset="1" stop-color="#d2d2d2"/></radialGradient><linearGradient id="gl" x1="0" y1="0" x2="0" y2="1"><stop offset="0" stop-color="#777"/><stop offset="0.5" stop-color="#111"/><stop offset="1" stop-color="#333"/></linearGradient><linearGradient id="gld" x1="0" y1="0" x2="0" y2="1"><stop offset="0" stop-color="#aaa"/><stop offset="0.5" stop-color="#858585"/><stop offset="1" stop-color="#999"/></linearGradient></defs><circle cx="450" cy="748" r="14.4" fill="url(#mg)" stroke="#5a5a5a" stroke-width="3.2"/><path d="M442.1 742 h3.9 v11.8 h-3.9 z M446.7 747.9 L457.8 740.1 L457.8 755.8 z" fill="url(#gl)"/><circle cx="486.9" cy="748" r="14.4" fill="url(#mg)" stroke="#5a5a5a" stroke-width="3.2"/><path d="M479 747.9 L486.9 740.1 L486.9 755.8 z M487.6 747.9 L493.1 742 L493.1 753.8 z" fill="url(#gl)"/><circle cx="523.9" cy="748" r="14.4" fill="url(#mg)" stroke="#5a5a5a" stroke-width="3.2"/><path d="M519.8 740.1 L531.5 747.9 L519.8 755.9 z" fill="url(#gl)"/><circle cx="560.8" cy="748" r="14.4" fill="url(#mgd)" stroke="#a3a3a3" stroke-width="3.2"/><path d="M554.9 742.4 L560.3 748 L554.9 753.6 z M561.2 740 L568.8 748 L561.2 756 z" fill="url(#gld)"/><circle cx="598.1" cy="748" r="14.4" fill="url(#mgd)" stroke="#a3a3a3" stroke-width="3.2"/><path d="M590 740.1 L601.7 748 L590 755.9 z M602.1 742 h3.8 v11.6 h-3.8 z" fill="url(#gld)"/></svg>
<div class="t" style="left:620.5px;top:742.20px;font-size:13.3px;color:#000;">Timestep:</div>

<div class="edit" style="left:684.9px;top:737.3px;width:124.7px;height:19.8px"></div>
<div class="t" style="left:687.5px;top:742.20px;font-size:13.3px;color:#000;">20</div>

<div class="t" style="left:816px;top:742.20px;font-size:13.3px;color:#000;">Time:</div>

<div class="edit" style="left:854.3px;top:737.3px;width:124.6px;height:19.8px"></div>
<div class="t" style="left:857px;top:742.20px;font-size:13.3px;color:#000;">2.0</div>

<div class="t" style="left:984px;top:742.20px;font-size:13.3px;color:#000;">Frame delay:</div>

<div class="edit" style="left:1064.5px;top:737.3px;width:127px;height:19.8px"></div>
<div class="t" style="left:1067.5px;top:742.20px;font-size:13.3px;color:#000;">100</div>

<div class="abs" style="left:435px;top:775.8px;width:750px;height:3px;border-radius:1.5px;background:#3b8fef"></div>
<div class="abs" style="left:1175.5px;top:769.3px;width:16.4px;height:16.4px;border-radius:8.2px;background:#fcfcfc;border:1px solid #b8b8b8;box-shadow:0 0.5px 1px rgba(0,0,0,0.15)"></div>
</body></html>
